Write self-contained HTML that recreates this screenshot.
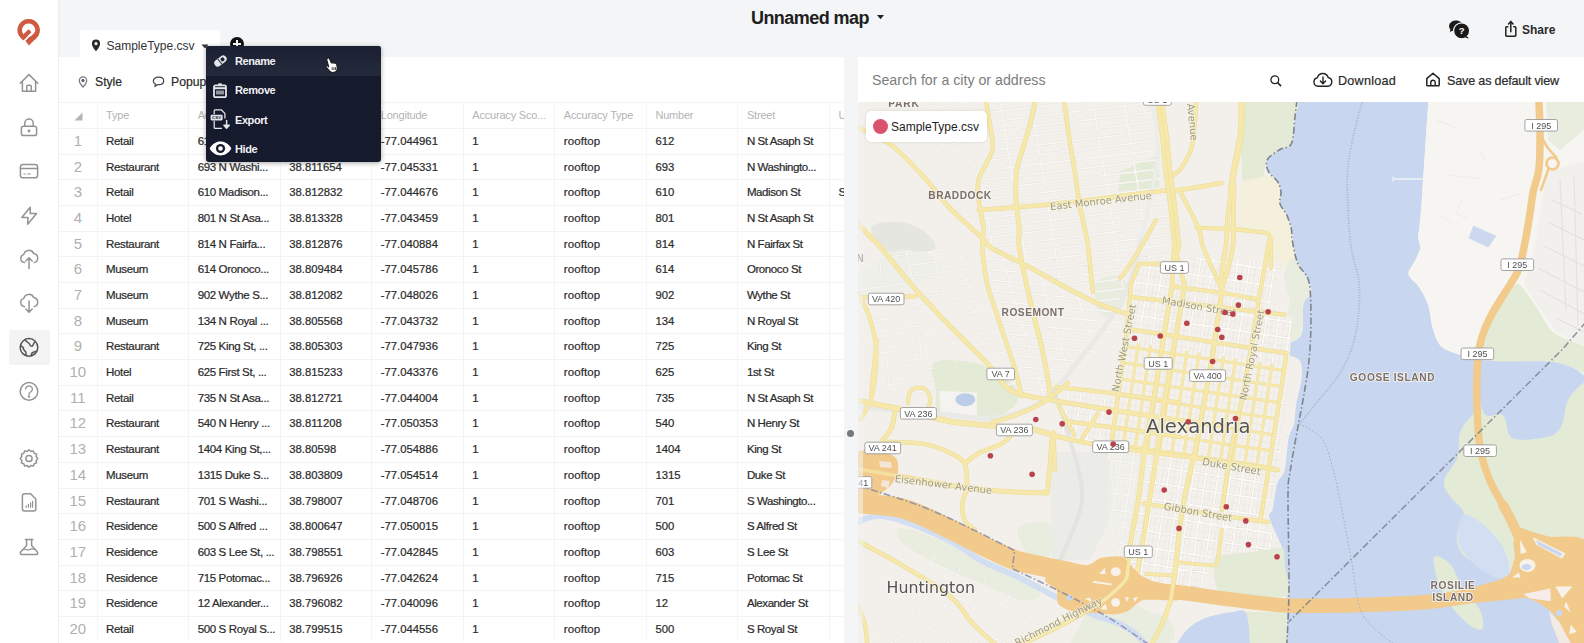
<!DOCTYPE html>
<html lang="en">
<head>
<meta charset="utf-8">
<title>Unnamed map</title>
<style>
*{box-sizing:border-box;margin:0;padding:0}
html,body{width:1584px;height:643px;overflow:hidden}
body{background:#f4f5f6;font-family:"Liberation Sans",sans-serif;color:#2a2a2a;position:relative}
.abs{position:absolute}
#sidebar{left:0;top:0;width:58px;height:643px;background:#fff;box-shadow:1px 0 3px rgba(0,0,0,.05)}
#sidebar svg{position:absolute;left:17px}
.sic{fill:none;stroke:#939393;stroke-width:1.5;stroke-linecap:round;stroke-linejoin:round}
#title{left:751px;top:7.500px;font-size:18px;font-weight:bold;color:#1e1e1e;white-space:nowrap;letter-spacing:-.56px}
#tab{left:80px;top:30px;width:140px;height:28px;background:#fff;border-radius:3px 3px 0 0}
#tab span{position:absolute;left:26.500px;top:8.500px;font-size:12px;color:#333;white-space:nowrap}
#lpanel{left:59px;top:57px;width:785px;height:586px;background:#fff}
#rpanel{left:858px;top:57px;width:726px;height:45px;background:#fff}
.tb{font-size:12.200px;color:#2a2a2a;white-space:nowrap;-webkit-text-stroke:.2px #2a2a2a}
#grid{left:59px;top:102px;width:785px;height:541px;overflow:hidden}
.row{position:absolute;left:0;width:785px;height:26px;border-top:1px solid #f3f3f3}
.c{position:absolute;top:0;height:100%;border-left:1px solid #f5f5f5;-webkit-text-stroke:.22px #2b2b2b;font-size:11.500px;line-height:25px;padding-left:8.500px;letter-spacing:-.35px;color:#2b2b2b;white-space:nowrap;overflow:hidden}
.hd .c{color:#b3b3b3;-webkit-text-stroke:0;font-size:11px;letter-spacing:-.2px}
.c.num{font-size:11.300px;letter-spacing:0}
.c.st{letter-spacing:-.42px}
.c.rt{letter-spacing:.08px}
.n{position:absolute;left:0;top:0;width:37.600px;height:100%;text-align:center;font-size:15px;line-height:23px;color:#b0b0b0}
#menu{left:206px;top:46px;width:174.500px;height:115.500px;background:#151a2d;border-radius:3px;box-shadow:0 1px 5px rgba(0,0,0,.35)}
#menu .it{position:absolute;left:0;width:175px;height:29px;color:#f1f1f5;font-size:11px;font-weight:bold;line-height:30.500px;padding-left:29px;letter-spacing:-.42px}
#menu svg{position:absolute}
#search{left:872px;top:72.300px;font-size:14.200px;color:#7d7d7d;white-space:nowrap}
#map{left:858px;top:102px;width:726px;height:541px;overflow:hidden;background:#f3f0eb}
#mapwrap{left:858px;top:102px;width:726px;height:541px;overflow:hidden;background:#f3f0eb}
#mapwrap svg{position:absolute;left:0;top:0;filter:blur(.45px)}
#legend{left:866px;top:111px;width:120.500px;height:30.500px;background:#fff;border-radius:5px;box-shadow:0 0 3px rgba(0,0,0,.12)}
#legend i{position:absolute;left:7px;top:8px;width:15px;height:15px;border-radius:50%;background:#d9536c}
#legend span{position:absolute;left:25px;top:8.600px;font-size:12px;color:#222;white-space:nowrap}
</style>
</head>
<body>
<div id="sidebar" class="abs">
<!-- logo -->
<svg style="left:14px;top:16px" width="30" height="32" viewBox="0 0 30 32"><path d="M14.6 5.2 a8.9 8.9 0 1 0 0.1 0 z" fill="none" stroke="#cf5a3f" stroke-width="4.6"/><path d="M9.6 24.2 L17.6 16.2 L14.6 13.2 L7 20.6 Z" fill="#cf5a3f"/><path d="M21.6 15.5 L11.8 25.6 L15 29.6 L24.6 19.6 Z" fill="#cf5a3f"/><path d="M10.2 24.9 L19.4 15.6" stroke="#fff" stroke-width="1.5"/></svg>
<!-- home -->
<svg style="top:71px" width="24" height="24" viewBox="0 0 24 24" class="sic"><path d="M3.2 12.2 L12 3.6 L20.8 12.2"/><path d="M5.4 10.4 V20.2 H18.6 V10.4"/><path d="M9.8 20.2 V15.2 a1 1 0 0 1 1 -1 h2.4 a1 1 0 0 1 1 1 V20.2"/></svg>
<!-- lock -->
<svg style="top:115px" width="24" height="24" viewBox="0 0 24 24" class="sic"><rect x="4.4" y="11.2" width="15.2" height="9.4" rx="2.2"/><path d="M7.8 11.2 V8.2 a4.2 4.2 0 0 1 8.4 0 V11.2"/><circle cx="12" cy="16" r=".7" fill="#8e8e8e"/></svg>
<!-- card -->
<svg style="top:159px" width="24" height="24" viewBox="0 0 24 24" class="sic"><rect x="3.4" y="5.4" width="17.2" height="13.4" rx="2.6"/><path d="M3.6 9.6 H20.4"/><path d="M6.8 15 H8.2 M10.6 15 H13.4" stroke-width="1.2"/></svg>
<!-- bolt -->
<svg style="top:203px" width="24" height="24" viewBox="0 0 24 24" class="sic"><path d="M13.2 4.2 L4.8 14.4 H11 L10.6 21.2 L19.6 10.6 H13.2 Z"/></svg>
<!-- cloud up -->
<svg style="top:247px" width="24" height="24" viewBox="0 0 24 24" class="sic"><path d="M7.4 15.6 a4.2 4.2 0 0 1 -.6 -8.2 a5.2 5.2 0 0 1 9.8 -1 a4.7 4.7 0 0 1 .6 9.2"/><path d="M12 21.4 V11.2 M8.8 14 L12 10.8 L15.2 14"/></svg>
<!-- cloud down -->
<svg style="top:291px" width="24" height="24" viewBox="0 0 24 24" class="sic"><path d="M7.4 15.6 a4.2 4.2 0 0 1 -.6 -8.2 a5.2 5.2 0 0 1 9.8 -1 a4.7 4.7 0 0 1 .6 9.2"/><path d="M12 10 V20.8 M8.8 18 L12 21.2 L15.2 18"/></svg>
<!-- globe (active) -->
<div class="abs" style="left:9px;top:330px;width:41px;height:35px;background:#f3f3f4;border-radius:2px"></div>
<svg style="top:335px" width="24" height="24" viewBox="0 0 24 24" class="sic" stroke="#555"><g stroke="#555"><circle cx="12" cy="12.4" r="8.8"/><path d="M8.2 4.6 c.6 2.6 3.2 2.2 4 4 c.6 1.6 1.2 3.2 2.8 2.6 c1.600 -.6 1.200 -3 2.6 -3.800"/><path d="M4 11 c2 .4 2.400 1.800 2.600 3.200 c.2 1.600 2.400 1.800 2.400 3.600 c0 1.200 -.2 2 .4 3"/><path d="M14.400 20.800 c-.2 -1.600 .4 -3.200 2 -3.600 c1.200 -.3 2.200 -.4 3 -1.200"/></g></svg>
<!-- help -->
<svg style="top:379px" width="24" height="24" viewBox="0 0 24 24" class="sic"><circle cx="12" cy="12.400" r="8.800"/><path d="M8.6 10 a3.400 3.100 0 1 1 5.200 2.700 c-1.200 .8 -1.800 1.400 -1.800 2.700" stroke-width="1.300"/><circle cx="12" cy="17.600" r=".5" fill="#8e8e8e"/></svg>
<!-- gear -->
<svg style="top:446px" width="24" height="24" viewBox="0 0 24 24" class="sic"><circle cx="12" cy="12.500" r="3.100"/><path d="M12 3.700 l1.900 1.700 2.500 -.5 .8 2.400 2.400 .8 -.5 2.500 1.700 1.900 -1.700 1.900 .5 2.500 -2.400 .8 -.8 2.400 -2.500 -.5 -1.900 1.700 -1.900 -1.700 -2.500 .5 -.8 -2.400 -2.400 -.8 .5 -2.500 -1.700 -1.900 1.700 -1.900 -.5 -2.500 2.400 -.8 .8 -2.400 2.500 .5 z"/></svg>
<!-- report -->
<svg style="top:490px" width="24" height="24" viewBox="0 0 24 24" class="sic"><path d="M7.400 3.800 H13.600 L18.800 9 V19 a2 2 0 0 1 -2 2 H7.400 a2 2 0 0 1 -2 -2 V5.800 a2 2 0 0 1 2 -2 z"/><path d="M9.200 17.200 V15.800 M11.400 17.200 V14.400 M13.600 17.200 V12.800 M15.600 17.200 V11.400" stroke-width="1.200"/></svg>
<!-- flask -->
<svg style="top:534px" width="24" height="24" viewBox="0 0 24 24" class="sic"><path d="M8.400 5.400 H15.800"/><path d="M9.600 5.600 V11.600 L3.600 18 a1.600 1.600 0 0 0 1.200 2.600 H19.200 a1.600 1.600 0 0 0 1.200 -2.600 L14.600 11.600 V5.600"/><path d="M6.400 15.600 c2 -1.200 4 1 6 0 c1.800 -.9 3.400 -.8 5 -.2" stroke-width="1.200"/></svg>
</div>
<div id="title" class="abs">Unnamed map</div>
<svg class="abs" style="left:876px;top:14px" width="9" height="6" viewBox="0 0 9 6"><path d="M1 1 H8 L4.500 5.200 Z" fill="#222"/></svg>
<!-- top right -->
<svg class="abs" style="left:1447px;top:17px" width="26" height="24" viewBox="0 0 26 24"><path d="M2 9 a7 5.600 0 1 1 3.400 4.800 L2.800 15 L3.400 12.600 A5.500 5.500 0 0 1 2 9 z" fill="#1a1a1a"/><circle cx="14.600" cy="13.800" r="8" fill="#1a1a1a" stroke="#f4f4f5" stroke-width="1.200"/><path d="M19.500 19 l2.600 2.400 -3.800 -.6z" fill="#1a1a1a"/><text x="14.600" y="17.400" font-family="Liberation Sans, sans-serif" font-size="9.500" font-weight="bold" fill="#fff" text-anchor="middle">?</text></svg>
<svg class="abs" style="left:1503px;top:19px" width="16" height="20" viewBox="0 0 16 20"><path d="M5.400 7.800 H3.600 a.8 .8 0 0 0 -.8 .8 V16.400 a.8 .8 0 0 0 .8 .8 H12 a.8 .8 0 0 0 .8 -.8 V8.600 a.8 .8 0 0 0 -.8 -.8 H10.200" fill="none" stroke="#222" stroke-width="1.500" stroke-linejoin="round"/><path d="M7.800 12.800 V2.800 M5.500 4.900 L7.800 2.400 L10.100 4.900" fill="none" stroke="#222" stroke-width="1.500" stroke-linecap="round" stroke-linejoin="round"/></svg>
<div class="abs" style="left:1522px;top:23px;font-size:12px;font-weight:bold;color:#2a2a2a">Share</div>
<!-- tab -->
<div id="tab" class="abs">
<svg style="position:absolute;left:11px;top:9px" width="10" height="13" viewBox="0 0 10 13"><path d="M5 .6 a4.100 4.100 0 0 1 4.100 4.100 c0 3 -4.100 7.500 -4.100 7.500 s-4.100 -4.500 -4.100 -7.500 A4.100 4.100 0 0 1 5 .6 z M5 3.100 a1.600 1.600 0 1 0 .01 0z" fill="#2b2b2b" fill-rule="evenodd"/></svg>
<span>SampleType.csv</span>
<svg style="position:absolute;left:121px;top:14px" width="8" height="5" viewBox="0 0 8 5"><path d="M.5 .5 H7.500 L4 4.500 Z" fill="#333"/></svg>
</div>
<div class="abs" style="left:230px;top:37px;width:14px;height:14px;border-radius:50%;background:#111"></div>
<div class="abs" style="left:233px;top:43px;width:8px;height:2px;background:#fff"></div>
<div class="abs" style="left:236px;top:40px;width:2px;height:8px;background:#fff"></div>
<!-- panels -->
<div id="lpanel" class="abs"></div>
<div id="rpanel" class="abs"></div>
<!-- toolbar -->
<svg class="abs" style="left:78px;top:76px" width="10" height="12" viewBox="0 0 10 12"><path d="M5 .8 a3.700 3.700 0 0 1 3.700 3.700 c0 2.700 -3.700 6.500 -3.700 6.500 s-3.700 -3.800 -3.700 -6.500 A3.700 3.700 0 0 1 5 .8 z" fill="none" stroke="#777" stroke-width="1.200"/><circle cx="5" cy="4.500" r="1.700" fill="#666"/></svg>
<div class="abs tb" style="left:95px;top:75px">Style</div>
<svg class="abs" style="left:152px;top:76px" width="13" height="12" viewBox="0 0 13 12"><path d="M6.500 1.200 c3 0 5.200 1.500 5.200 3.700 s-2.200 3.700 -5.200 3.700 c-.4 0 -.8 0 -1.200 -.1 L3 10.600 L3.400 8 C2 7.300 1.300 6.200 1.300 4.900 c0 -2.200 2.200 -3.700 5.200 -3.700z" fill="none" stroke="#444" stroke-width="1.200" stroke-linejoin="round"/></svg>
<div class="abs tb" style="left:171px;top:75px">Popup</div>
<!-- search bar -->
<div id="search" class="abs">Search for a city or address</div>
<svg class="abs" style="left:1269px;top:74px" width="14" height="14" viewBox="0 0 14 14"><circle cx="5.800" cy="5.800" r="3.900" fill="none" stroke="#222" stroke-width="1.300"/><path d="M8.600 8.600 L11.600 11.600" stroke="#222" stroke-width="1.500" stroke-linecap="round"/></svg>
<svg class="abs" style="left:1312px;top:71px" width="22" height="18" viewBox="0 0 22 18"><path d="M6 15.200 a4.300 4.300 0 0 1 -.6 -8.500 a5.600 5.600 0 0 1 10.800 -.2 a4.400 4.400 0 0 1 -.4 8.700 z" fill="none" stroke="#222" stroke-width="1.400" stroke-linejoin="round"/><path d="M11 6 V12.400 M8.400 10 L11 12.700 L13.600 10" fill="none" stroke="#222" stroke-width="1.400" stroke-linecap="round" stroke-linejoin="round"/></svg>
<div class="abs tb" style="left:1338px;top:73.500px;font-size:12.600px;letter-spacing:.25px">Download</div>
<svg class="abs" style="left:1424px;top:71px" width="18" height="17" viewBox="0 0 18 17"><path d="M2.800 7.600 L9 2.200 L15.200 7.600 V14 a.8 .8 0 0 1 -.8 .8 H3.600 a.8 .8 0 0 1 -.8 -.8 Z" fill="none" stroke="#222" stroke-width="1.500" stroke-linejoin="round"/><path d="M6.800 14.800 V11.400 a2.200 2.200 0 0 1 4.400 0 V14.800" fill="none" stroke="#222" stroke-width="1.400"/></svg>
<div class="abs tb" style="left:1447px;top:73.500px;font-size:12.600px;letter-spacing:-.18px">Save as default view</div>
<div id="grid" class="abs">
<div class="row hd" style="top:0px;height:26px"><svg style="position:absolute;left:15px;top:9px" width="9" height="9" viewBox="0 0 9 9"><path d="M8.500 .5 V8.500 H.5 Z" fill="#b5b5b5"/></svg><div class="c " style="left:37.60px;width:91.55px">Type</div><div class="c " style="left:129.15px;width:91.55px">Address</div><div class="c " style="left:220.70px;width:91.55px">Latitude</div><div class="c " style="left:312.25px;width:91.55px">Longitude</div><div class="c " style="left:403.80px;width:91.55px">Accuracy Sco...</div><div class="c " style="left:495.35px;width:91.55px">Accuracy Type</div><div class="c " style="left:586.90px;width:91.55px">Number</div><div class="c " style="left:678.45px;width:91.55px">Street</div><div class="c " style="left:770.00px;width:91.55px">U</div></div>
<div class="row" style="top:26.00px"><div class="n">1</div><div class="c " style="left:37.60px;width:91.55px">Retail</div><div class="c " style="left:129.15px;width:91.55px">612 N St Asa...</div><div class="c num" style="left:220.70px;width:91.55px">38.813047</div><div class="c num" style="left:312.25px;width:91.55px">-77.044961</div><div class="c num" style="left:403.80px;width:91.55px">1</div><div class="c rt" style="left:495.35px;width:91.55px">rooftop</div><div class="c num" style="left:586.90px;width:91.55px">612</div><div class="c st" style="left:678.45px;width:91.55px">N St Asaph St</div><div class="c " style="left:770.00px;width:91.55px"></div></div>
<div class="row" style="top:51.68px"><div class="n">2</div><div class="c " style="left:37.60px;width:91.55px">Restaurant</div><div class="c " style="left:129.15px;width:91.55px">693 N Washi...</div><div class="c num" style="left:220.70px;width:91.55px">38.811654</div><div class="c num" style="left:312.25px;width:91.55px">-77.045331</div><div class="c num" style="left:403.80px;width:91.55px">1</div><div class="c rt" style="left:495.35px;width:91.55px">rooftop</div><div class="c num" style="left:586.90px;width:91.55px">693</div><div class="c st" style="left:678.45px;width:91.55px">N Washingto...</div><div class="c " style="left:770.00px;width:91.55px"></div></div>
<div class="row" style="top:77.36px"><div class="n">3</div><div class="c " style="left:37.60px;width:91.55px">Retail</div><div class="c " style="left:129.15px;width:91.55px">610 Madison...</div><div class="c num" style="left:220.70px;width:91.55px">38.812832</div><div class="c num" style="left:312.25px;width:91.55px">-77.044676</div><div class="c num" style="left:403.80px;width:91.55px">1</div><div class="c rt" style="left:495.35px;width:91.55px">rooftop</div><div class="c num" style="left:586.90px;width:91.55px">610</div><div class="c st" style="left:678.45px;width:91.55px">Madison St</div><div class="c " style="left:770.00px;width:91.55px">S</div></div>
<div class="row" style="top:103.04px"><div class="n">4</div><div class="c " style="left:37.60px;width:91.55px">Hotel</div><div class="c " style="left:129.15px;width:91.55px">801 N St Asa...</div><div class="c num" style="left:220.70px;width:91.55px">38.813328</div><div class="c num" style="left:312.25px;width:91.55px">-77.043459</div><div class="c num" style="left:403.80px;width:91.55px">1</div><div class="c rt" style="left:495.35px;width:91.55px">rooftop</div><div class="c num" style="left:586.90px;width:91.55px">801</div><div class="c st" style="left:678.45px;width:91.55px">N St Asaph St</div><div class="c " style="left:770.00px;width:91.55px"></div></div>
<div class="row" style="top:128.72px"><div class="n">5</div><div class="c " style="left:37.60px;width:91.55px">Restaurant</div><div class="c " style="left:129.15px;width:91.55px">814 N Fairfa...</div><div class="c num" style="left:220.70px;width:91.55px">38.812876</div><div class="c num" style="left:312.25px;width:91.55px">-77.040884</div><div class="c num" style="left:403.80px;width:91.55px">1</div><div class="c rt" style="left:495.35px;width:91.55px">rooftop</div><div class="c num" style="left:586.90px;width:91.55px">814</div><div class="c st" style="left:678.45px;width:91.55px">N Fairfax St</div><div class="c " style="left:770.00px;width:91.55px"></div></div>
<div class="row" style="top:154.40px"><div class="n">6</div><div class="c " style="left:37.60px;width:91.55px">Museum</div><div class="c " style="left:129.15px;width:91.55px">614 Oronoco...</div><div class="c num" style="left:220.70px;width:91.55px">38.809484</div><div class="c num" style="left:312.25px;width:91.55px">-77.045786</div><div class="c num" style="left:403.80px;width:91.55px">1</div><div class="c rt" style="left:495.35px;width:91.55px">rooftop</div><div class="c num" style="left:586.90px;width:91.55px">614</div><div class="c st" style="left:678.45px;width:91.55px">Oronoco St</div><div class="c " style="left:770.00px;width:91.55px"></div></div>
<div class="row" style="top:180.08px"><div class="n">7</div><div class="c " style="left:37.60px;width:91.55px">Museum</div><div class="c " style="left:129.15px;width:91.55px">902 Wythe S...</div><div class="c num" style="left:220.70px;width:91.55px">38.812082</div><div class="c num" style="left:312.25px;width:91.55px">-77.048026</div><div class="c num" style="left:403.80px;width:91.55px">1</div><div class="c rt" style="left:495.35px;width:91.55px">rooftop</div><div class="c num" style="left:586.90px;width:91.55px">902</div><div class="c st" style="left:678.45px;width:91.55px">Wythe St</div><div class="c " style="left:770.00px;width:91.55px"></div></div>
<div class="row" style="top:205.76px"><div class="n">8</div><div class="c " style="left:37.60px;width:91.55px">Museum</div><div class="c " style="left:129.15px;width:91.55px">134 N Royal ...</div><div class="c num" style="left:220.70px;width:91.55px">38.805568</div><div class="c num" style="left:312.25px;width:91.55px">-77.043732</div><div class="c num" style="left:403.80px;width:91.55px">1</div><div class="c rt" style="left:495.35px;width:91.55px">rooftop</div><div class="c num" style="left:586.90px;width:91.55px">134</div><div class="c st" style="left:678.45px;width:91.55px">N Royal St</div><div class="c " style="left:770.00px;width:91.55px"></div></div>
<div class="row" style="top:231.44px"><div class="n">9</div><div class="c " style="left:37.60px;width:91.55px">Restaurant</div><div class="c " style="left:129.15px;width:91.55px">725 King St, ...</div><div class="c num" style="left:220.70px;width:91.55px">38.805303</div><div class="c num" style="left:312.25px;width:91.55px">-77.047936</div><div class="c num" style="left:403.80px;width:91.55px">1</div><div class="c rt" style="left:495.35px;width:91.55px">rooftop</div><div class="c num" style="left:586.90px;width:91.55px">725</div><div class="c st" style="left:678.45px;width:91.55px">King St</div><div class="c " style="left:770.00px;width:91.55px"></div></div>
<div class="row" style="top:257.12px"><div class="n">10</div><div class="c " style="left:37.60px;width:91.55px">Hotel</div><div class="c " style="left:129.15px;width:91.55px">625 First St, ...</div><div class="c num" style="left:220.70px;width:91.55px">38.815233</div><div class="c num" style="left:312.25px;width:91.55px">-77.043376</div><div class="c num" style="left:403.80px;width:91.55px">1</div><div class="c rt" style="left:495.35px;width:91.55px">rooftop</div><div class="c num" style="left:586.90px;width:91.55px">625</div><div class="c st" style="left:678.45px;width:91.55px">1st St</div><div class="c " style="left:770.00px;width:91.55px"></div></div>
<div class="row" style="top:282.80px"><div class="n">11</div><div class="c " style="left:37.60px;width:91.55px">Retail</div><div class="c " style="left:129.15px;width:91.55px">735 N St Asa...</div><div class="c num" style="left:220.70px;width:91.55px">38.812721</div><div class="c num" style="left:312.25px;width:91.55px">-77.044004</div><div class="c num" style="left:403.80px;width:91.55px">1</div><div class="c rt" style="left:495.35px;width:91.55px">rooftop</div><div class="c num" style="left:586.90px;width:91.55px">735</div><div class="c st" style="left:678.45px;width:91.55px">N St Asaph St</div><div class="c " style="left:770.00px;width:91.55px"></div></div>
<div class="row" style="top:308.48px"><div class="n">12</div><div class="c " style="left:37.60px;width:91.55px">Restaurant</div><div class="c " style="left:129.15px;width:91.55px">540 N Henry ...</div><div class="c num" style="left:220.70px;width:91.55px">38.811208</div><div class="c num" style="left:312.25px;width:91.55px">-77.050353</div><div class="c num" style="left:403.80px;width:91.55px">1</div><div class="c rt" style="left:495.35px;width:91.55px">rooftop</div><div class="c num" style="left:586.90px;width:91.55px">540</div><div class="c st" style="left:678.45px;width:91.55px">N Henry St</div><div class="c " style="left:770.00px;width:91.55px"></div></div>
<div class="row" style="top:334.16px"><div class="n">13</div><div class="c " style="left:37.60px;width:91.55px">Restaurant</div><div class="c " style="left:129.15px;width:91.55px">1404 King St,...</div><div class="c num" style="left:220.70px;width:91.55px">38.80598</div><div class="c num" style="left:312.25px;width:91.55px">-77.054886</div><div class="c num" style="left:403.80px;width:91.55px">1</div><div class="c rt" style="left:495.35px;width:91.55px">rooftop</div><div class="c num" style="left:586.90px;width:91.55px">1404</div><div class="c st" style="left:678.45px;width:91.55px">King St</div><div class="c " style="left:770.00px;width:91.55px"></div></div>
<div class="row" style="top:359.84px"><div class="n">14</div><div class="c " style="left:37.60px;width:91.55px">Museum</div><div class="c " style="left:129.15px;width:91.55px">1315 Duke S...</div><div class="c num" style="left:220.70px;width:91.55px">38.803809</div><div class="c num" style="left:312.25px;width:91.55px">-77.054514</div><div class="c num" style="left:403.80px;width:91.55px">1</div><div class="c rt" style="left:495.35px;width:91.55px">rooftop</div><div class="c num" style="left:586.90px;width:91.55px">1315</div><div class="c st" style="left:678.45px;width:91.55px">Duke St</div><div class="c " style="left:770.00px;width:91.55px"></div></div>
<div class="row" style="top:385.52px"><div class="n">15</div><div class="c " style="left:37.60px;width:91.55px">Restaurant</div><div class="c " style="left:129.15px;width:91.55px">701 S Washi...</div><div class="c num" style="left:220.70px;width:91.55px">38.798007</div><div class="c num" style="left:312.25px;width:91.55px">-77.048706</div><div class="c num" style="left:403.80px;width:91.55px">1</div><div class="c rt" style="left:495.35px;width:91.55px">rooftop</div><div class="c num" style="left:586.90px;width:91.55px">701</div><div class="c st" style="left:678.45px;width:91.55px">S Washingto...</div><div class="c " style="left:770.00px;width:91.55px"></div></div>
<div class="row" style="top:411.20px"><div class="n">16</div><div class="c " style="left:37.60px;width:91.55px">Residence</div><div class="c " style="left:129.15px;width:91.55px">500 S Alfred ...</div><div class="c num" style="left:220.70px;width:91.55px">38.800647</div><div class="c num" style="left:312.25px;width:91.55px">-77.050015</div><div class="c num" style="left:403.80px;width:91.55px">1</div><div class="c rt" style="left:495.35px;width:91.55px">rooftop</div><div class="c num" style="left:586.90px;width:91.55px">500</div><div class="c st" style="left:678.45px;width:91.55px">S Alfred St</div><div class="c " style="left:770.00px;width:91.55px"></div></div>
<div class="row" style="top:436.88px"><div class="n">17</div><div class="c " style="left:37.60px;width:91.55px">Residence</div><div class="c " style="left:129.15px;width:91.55px">603 S Lee St, ...</div><div class="c num" style="left:220.70px;width:91.55px">38.798551</div><div class="c num" style="left:312.25px;width:91.55px">-77.042845</div><div class="c num" style="left:403.80px;width:91.55px">1</div><div class="c rt" style="left:495.35px;width:91.55px">rooftop</div><div class="c num" style="left:586.90px;width:91.55px">603</div><div class="c st" style="left:678.45px;width:91.55px">S Lee St</div><div class="c " style="left:770.00px;width:91.55px"></div></div>
<div class="row" style="top:462.56px"><div class="n">18</div><div class="c " style="left:37.60px;width:91.55px">Residence</div><div class="c " style="left:129.15px;width:91.55px">715 Potomac...</div><div class="c num" style="left:220.70px;width:91.55px">38.796926</div><div class="c num" style="left:312.25px;width:91.55px">-77.042624</div><div class="c num" style="left:403.80px;width:91.55px">1</div><div class="c rt" style="left:495.35px;width:91.55px">rooftop</div><div class="c num" style="left:586.90px;width:91.55px">715</div><div class="c st" style="left:678.45px;width:91.55px">Potomac St</div><div class="c " style="left:770.00px;width:91.55px"></div></div>
<div class="row" style="top:488.24px"><div class="n">19</div><div class="c " style="left:37.60px;width:91.55px">Residence</div><div class="c " style="left:129.15px;width:91.55px">12 Alexander...</div><div class="c num" style="left:220.70px;width:91.55px">38.796082</div><div class="c num" style="left:312.25px;width:91.55px">-77.040096</div><div class="c num" style="left:403.80px;width:91.55px">1</div><div class="c rt" style="left:495.35px;width:91.55px">rooftop</div><div class="c num" style="left:586.90px;width:91.55px">12</div><div class="c st" style="left:678.45px;width:91.55px">Alexander St</div><div class="c " style="left:770.00px;width:91.55px"></div></div>
<div class="row" style="top:513.92px"><div class="n">20</div><div class="c " style="left:37.60px;width:91.55px">Retail</div><div class="c " style="left:129.15px;width:91.55px">500 S Royal S...</div><div class="c num" style="left:220.70px;width:91.55px">38.799515</div><div class="c num" style="left:312.25px;width:91.55px">-77.044556</div><div class="c num" style="left:403.80px;width:91.55px">1</div><div class="c rt" style="left:495.35px;width:91.55px">rooftop</div><div class="c num" style="left:586.90px;width:91.55px">500</div><div class="c st" style="left:678.45px;width:91.55px">S Royal St</div><div class="c " style="left:770.00px;width:91.55px"></div></div>
</div>
<div id="mapwrap" class="abs"><svg width="726" height="541" viewBox="858 102 726 541" font-family="Liberation Sans, DejaVu Sans, sans-serif">
<rect x="858" y="102" width="726" height="541" fill="#f3f0eb"/>
<path d="M1297 100C1296.6 103.1 1295.7 111.1 1294.8 118.4C1293.9 125.7 1293.9 138.5 1291.4 143.7C1288.9 148.9 1283.9 146.8 1279.9 149.5C1275.9 152.2 1269.1 156.2 1267.2 159.9C1265.3 163.6 1266.7 167.8 1268.4 171.4C1270.1 175 1275.5 178.2 1277.6 181.7C1279.7 185.1 1280.6 188.4 1281 192.1C1281.4 195.8 1278.9 199.8 1279.9 203.6C1280.9 207.4 1284.9 210.9 1286.8 215.1C1288.7 219.3 1290.2 223.5 1291.4 229C1292.6 234.5 1292.9 242.9 1293.7 248C1294.5 253.1 1293.5 254.1 1296 259.8C1298.5 265.5 1306.5 276.6 1309 282.2C1311.5 287.8 1311.8 289.7 1310.9 293.4C1310 297.1 1305 297.8 1303.4 304.6C1301.8 311.4 1304.6 327.6 1301.5 334.4C1298.4 341.2 1287.9 342.5 1284.8 345.6C1281.7 348.7 1280.4 350.6 1282.9 353.1C1285.4 355.6 1296.6 356.1 1299.7 360.5C1302.8 364.9 1302.1 371.7 1301.5 379.2C1300.9 386.7 1297.2 397.8 1296 405.3C1294.8 412.8 1295.3 418.4 1294.1 424C1292.8 429.6 1290 431.2 1288.5 438.9C1287 446.6 1286.7 462.6 1284.8 470C1282.9 477.4 1279.3 477.1 1277.3 483.6C1275.3 490.1 1274 503.3 1272.7 509C1271.4 514.7 1267.9 511.5 1269.5 518C1271.1 524.5 1279.7 540.3 1282.2 548C1284.7 555.7 1283.7 556 1284.5 564C1285.3 572 1286.4 587 1286.8 596C1287.2 605 1287.1 609.8 1287 618C1286.9 626.2 1286.2 640.5 1286 645 L1286 645 L1586 645 L1586 377 L1586 377C1583.8 375.4 1579 370.3 1573 367.7C1567 365.1 1563.1 362.6 1550.1 361.5C1537.1 360.4 1507.2 361.3 1494.9 360.8C1482.6 360.3 1483.4 359.9 1476.5 358.5C1469.6 357.1 1459.6 355 1453.5 352.7C1447.4 350.4 1443.2 348.7 1439.7 344.7C1436.2 340.7 1434.7 335.1 1432.8 328.6C1430.9 322.1 1430.5 312.4 1428.2 305.5C1425.9 298.6 1422.3 292.3 1419 287.1C1415.7 281.9 1409.4 278.7 1408.6 274.5C1407.8 270.3 1412.5 266.2 1414.4 261.8C1416.4 257.4 1419.7 252 1420.3 248C1420.9 244 1418.2 241.2 1418 238C1417.8 234.8 1418.6 234.7 1419.2 229C1419.8 223.3 1420.7 213.6 1421.5 203.6C1422.3 193.6 1423 180.5 1423.8 169C1424.6 157.5 1425.3 146 1426.1 134.5C1426.9 123 1428 105.8 1428.4 100Z" fill="#c8d6ef"/>
<path d="M1586 372C1583.4 333.5 1580.2 369.8 1573 367.7C1565.8 365.6 1565.6 362.8 1550 361.5C1534.4 360.2 1508.3 361 1494.9 361C1481.5 361 1485.8 357.7 1483 361.5C1480.2 365.3 1481.8 369.9 1481 380C1480.2 390.1 1480.5 405.2 1479 412C1477.5 418.8 1477.3 410.1 1473.6 414C1469.9 417.9 1463.8 422.9 1460.5 431.7C1457.2 440.5 1460.5 448 1457.2 457.8C1453.9 467.6 1445.5 472.9 1444.2 480.7C1442.9 488.5 1446.8 490.5 1450.7 497C1454.6 503.5 1462.5 506.2 1463.8 513.4C1465.1 520.6 1458 525.7 1457.2 533C1456.4 540.3 1457.4 544.6 1460 550C1462.6 555.4 1464.4 556.8 1470 560C1475.6 563.2 1481 563 1488 566C1495 569 1498.6 571.6 1505 575C1511.4 578.4 1503.8 586 1520 583C1536.2 580 1572.8 602.2 1586 560C1599.2 517.8 1588.6 410.5 1586 372Z" fill="#e3ebd6"/>
<path d="M1483.4 361.4C1500.5 353.8 1568.9 363.3 1586 366.3C1603.1 369.3 1589 373.9 1586 379.4C1583 384.8 1572.3 391.4 1568.3 399C1564.3 406.6 1565.1 418.8 1561.8 425.1C1558.5 431.4 1556.9 434.4 1548.7 436.6C1540.5 438.8 1520.4 441.8 1512.8 438.2C1505.2 434.6 1507.9 419.7 1503 415.3C1498.1 410.9 1486.7 421 1483.4 412C1480.1 403 1466.3 369 1483.4 361.4Z" fill="#c8d6ef"/>
<path d="M1463 515C1466.7 512 1474.2 517.8 1480 522C1485.8 526.2 1493.3 533.7 1498 540C1502.7 546.3 1506.3 553.3 1508 560C1509.7 566.7 1511 577.5 1508 580C1505 582.5 1496.3 578.3 1490 575C1483.7 571.7 1475.3 565.8 1470 560C1464.7 554.2 1459.2 547.5 1458 540C1456.8 532.5 1459.3 518 1463 515Z" fill="#d2def2"/>
<path d="M1434 557C1435.9 553.9 1445.3 559 1450 564C1454.7 569 1457 579.3 1462 587C1467 594.7 1476.6 603.1 1480 610C1483.4 616.9 1484 625.8 1482.5 628.5C1481 631.2 1476 629.4 1471 626C1466 622.6 1458 615.2 1452.6 608C1447.2 600.8 1441.8 591 1438.7 582.5C1435.6 574 1432.1 560.1 1434 557Z" fill="#e3ebd6"/>
<path d="M1428.4 100C1428 105.8 1426.9 123 1426.1 134.5C1425.3 146 1424.6 157.5 1423.8 169C1423 180.5 1422.3 193.6 1421.5 203.6C1420.7 213.6 1419.8 223.3 1419.2 229C1418.6 234.7 1417.8 234.8 1418 238C1418.2 241.2 1420.9 244 1420.3 248C1419.7 252 1416.4 257.4 1414.4 261.8C1412.5 266.2 1407.8 270.3 1408.6 274.5C1409.4 278.7 1415.7 281.9 1419 287.1C1422.3 292.3 1425.9 298.6 1428.2 305.5C1430.5 312.4 1430.9 322.1 1432.8 328.6C1434.7 335.1 1436.2 340.7 1439.7 344.7C1443.2 348.7 1447.4 350.4 1453.5 352.7C1459.6 355 1469.6 357.1 1476.5 358.5C1483.4 359.9 1482.6 360.3 1494.9 360.8C1507.2 361.3 1537.1 360.4 1550.1 361.5C1563.1 362.6 1567 365.1 1573 367.7C1579 370.3 1583.8 375.4 1586 377 L1586 377 L1586 100 Z" fill="#f6f5f2"/>
<path d="M1546 100L1586 100L1586 128L1560 150L1548 140Z" fill="#e8eddf"/>
<path d="M1519 284.5C1522.9 286 1530.3 298.5 1535 305C1539.7 311.5 1547.2 327.3 1554 333C1560.8 338.7 1581.7 342.8 1586 348C1590.3 353.2 1587.7 369.4 1586 372C1584.3 374.6 1577.8 369.1 1573 367.7C1568.2 366.3 1560.4 362.4 1550 361.5C1539.6 360.6 1504 362.3 1494.9 361C1485.8 359.7 1483.5 355.5 1482 352C1480.5 348.5 1482.7 339.9 1484 335C1485.3 330.1 1489.1 320.5 1492 315C1494.9 309.5 1502.4 298.1 1506 294C1509.6 289.9 1515.1 283 1519 284.5Z" fill="#e3ebd6"/>
<path d="M1548 172L1586 160L1586 346L1556 332L1537 304L1524 284L1536 240L1542 200Z" fill="#f1f0ec"/>
<g stroke="#e3e2de" stroke-width="1.200" fill="none"><path d="M1552 200l30 14M1548 222l36 18M1544 246l40 20M1538 268l46 24M1540 290l44 24M1556 318l28 14M1560 180l6 130M1574 176l4 150"/></g>
<path d="M1473.3 225.5L1496.3 235.9L1488.3 247.4L1468.7 238.2Z" fill="#cbd8ee"/>
<path d="M1393 179H1423" stroke="#eef2f8" stroke-width="1.500"/><path d="M1393 176.500V181.500" stroke="#eef2f8" stroke-width="1.200"/>
<g stroke="#eeece8" stroke-width="1" fill="none"><path d="M1436 120l20 8M1450 175l30 4M1462 200l-6 14 12 4M1500 200l20 -6M1440 215l14 10M1480 150l6 12"/></g>
<path d="M1243 100C1247.5 93.3 1292.7 98.5 1297 100C1301.3 101.5 1295.3 114.8 1294.8 118.4C1294.3 122 1292.6 141.1 1291.4 143.7C1290.2 146.3 1281.9 148.2 1279.9 149.5C1277.9 150.8 1268.5 158 1267.2 159.9C1265.9 161.8 1264.4 170.3 1264 172C1263.6 173.7 1263.8 179.3 1262 180C1260.2 180.7 1244.6 186.7 1243 180C1241.4 173.3 1238.5 106.7 1243 100Z" fill="#e3ebd6"/>
<path d="M1241 184C1243.3 179.5 1265 176.2 1268 176C1271 175.8 1276.5 180.4 1277.6 181.7C1278.7 183 1280.8 190.3 1281 192.1C1281.2 193.9 1279.4 201.7 1279.9 203.6C1280.4 205.5 1285.8 213 1286.8 215.1C1287.8 217.2 1290.8 226.3 1291.4 229C1292 231.7 1293.3 245.2 1293.7 248C1294.1 250.8 1297.8 260.2 1296 262C1294.2 263.8 1274.2 272.2 1272 270C1269.8 267.8 1272.7 239.3 1270 236C1267.3 232.7 1242.4 234.3 1240 230C1237.6 225.7 1238.7 188.5 1241 184Z" fill="#f5f0dc"/>
<path d="M1288 262C1289.6 259.3 1293.2 257.1 1296 259.8C1298.8 262.5 1307 277.7 1309 282.2C1311 286.7 1311.6 290.4 1310.9 293.4C1310.2 296.4 1304.7 299.1 1303.4 304.6C1302.1 310.1 1303.3 329.7 1301.5 334.4C1299.7 339.1 1292.1 341.9 1290 340C1287.9 338.1 1286 325.3 1286 320C1286 314.7 1290.3 305.3 1290 300C1289.7 294.7 1284.3 285.1 1284 280C1283.7 274.9 1286.4 264.7 1288 262Z" fill="#e8eddf"/>
<path d="M1120.5 171.4L1158.5 155.3L1159.6 188.6L1118.2 191Z" fill="#e3ebd6"/>
<path d="M872 226C875.3 222 891.2 221 900 222C908.8 223 919.2 227.3 925 232C930.8 236.7 938.3 246 935 250C931.7 254 914.2 256.7 905 256C895.8 255.3 885.5 251 880 246C874.5 241 868.7 230 872 226Z" fill="#e6e6e1"/>
<path d="M1096 282C1099.7 276.3 1114.7 273.7 1120 276C1125.3 278.3 1129.3 289 1128 296C1126.7 303 1117 315.7 1112 318C1107 320.3 1100.7 316 1098 310C1095.3 304 1092.3 287.7 1096 282Z" fill="#e8eddf"/>
<path d="M858 276C865 269 886.3 252.3 900 250C913.7 247.7 935 257 940 262C945 267 940 275 930 280C920 285 892 290 880 292C868 294 861.7 294.7 858 292C854.3 289.3 851 283 858 276Z" fill="#eeefe8"/>
<path d="M934.5 362.4C941.7 358 965.9 360.2 979.3 364.3C992.7 368.4 1008.9 379.9 1014.8 386.7C1020.7 393.5 1019.1 399.7 1014.8 405.3C1010.4 410.9 994.9 418.1 988.7 420.3C982.5 422.5 982.3 418.9 977.5 418.4C972.7 417.8 966.5 417.7 960 417C953.5 416.3 942.3 418.4 938.3 414C934.3 409.6 936.6 399 936 390.4C935.4 381.8 927.3 366.8 934.5 362.4Z" fill="#e3ebd6"/>
<path d="M939 391L977 392.5L977 416L941 414Z" fill="#f5f3ef"/>
<ellipse cx="965.300" cy="399.700" rx="10" ry="6.500" fill="#bccdea"/>
<path d="M1054 452L1112 452L1116 470L1110 520L1090 560L1052 560L1050 500Z" fill="#ebebe8"/>
<path d="M1018 528C1021 522.7 1042.3 520 1048 524C1053.7 528 1055 546.7 1052 552C1049 557.3 1035.7 560 1030 556C1024.3 552 1015 533.3 1018 528Z" fill="#e8eddf"/>
<path d="M1085 615C1090.8 612.5 1109.2 600.5 1120 600C1130.8 599.5 1141.7 608.7 1150 612C1158.3 615.3 1167.5 614.5 1170 620C1172.5 625.5 1181.7 640.8 1165 645C1148.3 649.2 1085.8 645 1070 645Z" fill="#e8eddf"/>
<path d="M1215 555C1218 550.6 1243.3 548.7 1250 548C1256.7 547.3 1278.8 546.4 1282.2 548C1285.7 549.6 1284 559.2 1284.5 564C1285 568.8 1293.2 593.2 1286.8 596C1280.3 598.8 1227.2 596.1 1220 592C1212.8 587.9 1212 559.4 1215 555Z" fill="#e3ebd6"/>
<path d="M1243 612L1287 612L1286 645L1246 645Z" fill="#e3ebd6"/>
<path d="M1175.9 645C1178 642.2 1183.2 632.9 1188.2 628.4C1193.2 623.9 1198.7 620.5 1205.7 617.9C1212.7 615.3 1223.3 613.4 1230 612.6C1236.7 611.8 1242.7 607.6 1246 613C1249.3 618.4 1249.3 639.7 1250 645Z" fill="#c8d6ef"/>
<path d="M900 528C905.8 527.2 923.3 533 940 540C956.7 547 983.3 561.3 1000 570C1016.7 578.7 1036.7 587 1040 592C1043.3 597 1033.3 602.8 1020 600C1006.7 597.2 979.2 584.2 960 575C940.8 565.8 915 552.8 905 545C895 537.2 894.2 528.8 900 528Z" fill="#e8eddf"/>
<path d="M856 522.3C860 521.2 870.4 515.4 879.8 515.8C889.2 516.2 899.7 519.8 912.4 524.5C925.1 529.2 944.6 538.1 955.9 544C967.1 549.9 969.2 554.3 979.9 560C990.6 565.7 1007.3 571.8 1020 578C1032.7 584.2 1046.8 592.3 1056 597C1065.2 601.7 1068.2 602.8 1075 606C1081.8 609.2 1089.6 613.2 1096.8 616.1C1104 619 1111.5 620.2 1117.9 623.1C1124.3 626 1130.7 630.1 1135.4 633.7C1140.1 637.4 1144.2 643.1 1146 645" fill="none" stroke="#d2def2" stroke-width="6" stroke-linecap="round"/>
<defs><clipPath id="ot"><path d="M1137 262L1200 258L1283 262L1270 300L1292 318L1290 352L1278 480L1264 520L1280 548L1250 552L1215 556L1200 600L1120 590L1108 452L1056 440L1062 392L1117 400L1128 330Z"/></clipPath>
<clipPath id="dr"><path d="M990 102L1160 102L1170 190L1176 250L1130 300L1100 304L1065 287L1024 264L991 248L978 200L992 148Z"/></clipPath>
<clipPath id="rm"><path d="M982 250L1023.8 266L1065 289L1100 306L1128 316L1110 340L1076 372L1052 394L1021 396L1005 340L988 285Z"/></clipPath>
<clipPath id="wk"><path d="M858 225L882 250L916 290L950 327L985 362L934 362L934 392L900 400L858 400Z"/></clipPath>
<clipPath id="kr"><path d="M884 250L980 250L986.9 282.5L996.2 312.5L1005.4 340.1L1014.6 367.7L1018 392L1005.4 386.2L987 363.1L950.1 326.3L915.6 289.4Z"/></clipPath>
<clipPath id="nw"><path d="M858 130L892.5 148L927 182L950 210L978 236L976 192L988 160L991 128L986 102L1000 102L858 102Z"/></clipPath>
<clipPath id="hu"><path d="M858 530L900 540L960 566L1040 604L1075 625L1020 645L858 645Z"/></clipPath>
</defs>
<g clip-path="url(#dr)" fill="none"><path d="M975 94.8L1180 70.6M975 104.4L1180 80.2M975 114L1180 89.8M975 123.6L1180 99.4M975 133.2L1180 109M975 142.8L1180 118.6M975 152.4L1180 128.2M975 162L1180 137.8M975 171.6L1180 147.4M975 181.2L1180 157M975 190.8L1180 166.6M975 200.4L1180 176.2M975 210L1180 185.8M975 219.6L1180 195.4M975 229.2L1180 205M975 238.8L1180 214.6M975 248.4L1180 224.2M975 258L1180 233.8M975 267.6L1180 243.4M975 277.2L1180 253M975 286.8L1180 262.6M975 296.4L1180 272.2M975 306L1180 281.8M975 315.6L1180 291.4M975 325.2L1180 301M975 334.8L1180 310.6M938 100L970 300M969 100L1001 300M1000 100L1032 300M1031 100L1063 300M1062 100L1094 300M1093 100L1125 300M1124 100L1156 300" stroke="#e4e2dd" stroke-width="2.200"/><path d="M975 94.8L1180 70.6M975 104.4L1180 80.2M975 114L1180 89.8M975 123.6L1180 99.4M975 133.2L1180 109M975 142.8L1180 118.6M975 152.4L1180 128.2M975 162L1180 137.8M975 171.6L1180 147.4M975 181.2L1180 157M975 190.8L1180 166.6M975 200.4L1180 176.2M975 210L1180 185.8M975 219.6L1180 195.4M975 229.2L1180 205M975 238.8L1180 214.6M975 248.4L1180 224.2M975 258L1180 233.8M975 267.6L1180 243.4M975 277.2L1180 253M975 286.8L1180 262.6M975 296.4L1180 272.2M975 306L1180 281.8M975 315.6L1180 291.4M975 325.2L1180 301M975 334.8L1180 310.6M938 100L970 300M969 100L1001 300M1000 100L1032 300M1031 100L1063 300M1062 100L1094 300M1093 100L1125 300M1124 100L1156 300" stroke="#f8f7f4" stroke-width="1.500"/></g>
<g clip-path="url(#rm)" fill="none"><path d="M975 258L1135 271.6M975 268.5L1135 282.1M975 279L1135 292.6M975 289.5L1135 303.1M975 300L1135 313.6M975 310.5L1135 324.1M975 321L1135 334.6M975 331.5L1135 345.1M975 342L1135 355.6M975 352.5L1135 366.1M975 363L1135 376.6M975 373.5L1135 387.1M975 384L1135 397.6M975 394.5L1135 408.1M975 405L1135 418.6M975 415.5L1135 429.1M1000 250L1045 400M1032 250L1077 400M1064 250L1109 400M1096 250L1141 400M1128 250L1173 400" stroke="#e4e2dd" stroke-width="2.200"/><path d="M975 258L1135 271.6M975 268.5L1135 282.1M975 279L1135 292.6M975 289.5L1135 303.1M975 300L1135 313.6M975 310.5L1135 324.1M975 321L1135 334.6M975 331.5L1135 345.1M975 342L1135 355.6M975 352.5L1135 366.1M975 363L1135 376.6M975 373.5L1135 387.1M975 384L1135 397.6M975 394.5L1135 408.1M975 405L1135 418.6M975 415.5L1135 429.1M1000 250L1045 400M1032 250L1077 400M1064 250L1109 400M1096 250L1141 400M1128 250L1173 400" stroke="#f8f7f4" stroke-width="1.500"/></g>
<g clip-path="url(#wk)" fill="none" opacity=".8"><path d="M858 290L1010 270M858 301L1010 281M858 312L1010 292M858 323L1010 303M858 334L1010 314M858 345L1010 325M858 356L1010 336M858 367L1010 347M858 378L1010 358M858 389L1010 369M858 400L1010 380M858 411L1010 391M858 422L1010 402M858 433L1010 413M880 260L890 400M914 260L924 400M948 260L958 400M982 260L992 400" stroke="#e4e2dd" stroke-width="2.200"/><path d="M858 290L1010 270M858 301L1010 281M858 312L1010 292M858 323L1010 303M858 334L1010 314M858 345L1010 325M858 356L1010 336M858 367L1010 347M858 378L1010 358M858 389L1010 369M858 400L1010 380M858 411L1010 391M858 422L1010 402M858 433L1010 413M880 260L890 400M914 260L924 400M948 260L958 400M982 260L992 400" stroke="#f8f7f4" stroke-width="1.400"/></g>
<g clip-path="url(#kr)" fill="none" opacity=".85"><path d="M880 258L1020 240M880 269L1020 251M880 280L1020 262M880 291L1020 273M880 302L1020 284M880 313L1020 295M880 324L1020 306M880 335L1020 317M880 346L1020 328M880 357L1020 339M880 368L1020 350M880 379L1020 361M880 390L1020 372M880 401L1020 383M880 412L1020 394M880 423L1020 405M905 250L945 400M932 250L972 400M959 250L999 400M986 250L1026 400M1013 250L1053 400" stroke="#e4e2dd" stroke-width="2.200"/><path d="M880 258L1020 240M880 269L1020 251M880 280L1020 262M880 291L1020 273M880 302L1020 284M880 313L1020 295M880 324L1020 306M880 335L1020 317M880 346L1020 328M880 357L1020 339M880 368L1020 350M880 379L1020 361M880 390L1020 372M880 401L1020 383M880 412L1020 394M880 423L1020 405M905 250L945 400M932 250L972 400M959 250L999 400M986 250L1026 400M1013 250L1053 400" stroke="#f8f7f4" stroke-width="1.400"/></g>
<g clip-path="url(#nw)" fill="none" opacity=".7"><path d="M858 122L1000 96M858 135L1000 109M858 148L1000 122M858 161L1000 135M858 174L1000 148M858 187L1000 161M858 200L1000 174M858 213L1000 187M858 226L1000 200M858 239L1000 213M858 252L1000 226M858 265L1000 239M880 100L905 250M908 100L933 250M936 100L961 250M964 100L989 250M992 100L1017 250" stroke="#e4e2dd" stroke-width="2.200"/><path d="M858 122L1000 96M858 135L1000 109M858 148L1000 122M858 161L1000 135M858 174L1000 148M858 187L1000 161M858 200L1000 174M858 213L1000 187M858 226L1000 200M858 239L1000 213M858 252L1000 226M858 265L1000 239M880 100L905 250M908 100L933 250M936 100L961 250M964 100L989 250M992 100L1017 250" stroke="#f8f7f4" stroke-width="1.400"/></g>
<g clip-path="url(#hu)" fill="none" opacity=".7"><path d="M858 520L1080 615M858 532L1080 627M858 544L1080 639M858 556L1080 651M858 568L1080 663M858 580L1080 675M858 592L1080 687M858 604L1080 699M858 616L1080 711M858 628L1080 723M858 640L1080 735M858 652L1080 747M870 645L915 530M900 645L945 530M930 645L975 530M960 645L1005 530M990 645L1035 530M1020 645L1065 530M1050 645L1095 530M1080 645L1125 530" stroke="#e4e2dd" stroke-width="2.200"/><path d="M858 520L1080 615M858 532L1080 627M858 544L1080 639M858 556L1080 651M858 568L1080 663M858 580L1080 675M858 592L1080 687M858 604L1080 699M858 616L1080 711M858 628L1080 723M858 640L1080 735M858 652L1080 747M870 645L915 530M900 645L945 530M930 645L975 530M960 645L1005 530M990 645L1035 530M1020 645L1065 530M1050 645L1095 530M1080 645L1125 530" stroke="#f8f7f4" stroke-width="1.400"/></g>
<g clip-path="url(#ot)" fill="none"><path d="M1040 240L1320 240L1320 620L1040 620Z" fill="#f4f0eb"/><path d="M1078 248.9L1321.3 285.4M1075.6 265L1318.9 301.5M1073.2 281.1L1316.4 317.6M1070.7 297.2L1314 333.7M1068.3 313.3L1311.6 349.8M1065.9 329.5L1309.2 366M1063.5 345.6L1306.8 382.1M1061.1 361.7L1304.4 398.2M1058.7 377.8L1301.9 414.3M1056.2 393.9L1299.5 430.4M1053.8 410.1L1297.1 446.6M1051.4 426.2L1294.7 462.7M1049 442.3L1292.3 478.8M1046.6 458.4L1289.8 494.9M1044.2 474.5L1287.4 511M1041.7 490.7L1285 527.2M1039.3 506.8L1282.6 543.3M1036.9 522.9L1280.2 559.4M1034.5 539L1277.8 575.5M1032.1 555.1L1275.3 591.6M1029.6 571.3L1272.9 607.8M1098.7 235.5L1047.9 574M1110.8 237.3L1060.1 575.8M1123 239.1L1072.2 577.6M1135.2 241L1084.4 579.5M1147.3 242.8L1096.5 581.3M1159.5 244.6L1108.7 583.1M1171.7 246.4L1120.9 584.9M1183.8 248.3L1133 586.8M1196 250.1L1145.2 588.6M1208.1 251.9L1157.4 590.4M1220.3 253.7L1169.5 592.2M1232.5 255.6L1181.7 594.1M1244.6 257.4L1193.9 595.9M1256.8 259.2L1206 597.7M1269 261L1218.2 599.5M1281.1 262.9L1230.3 601.4M1293.3 264.7L1242.5 603.2M1305.5 266.5L1254.7 605M1317.6 268.3L1266.8 606.8" stroke="#ebe6e1" stroke-width=".7"/><path d="M1079.2 240.8L1322.5 277.3M1076.8 256.9L1320.1 293.4M1074.4 273L1317.7 309.5M1072 289.2L1315.2 325.7M1069.5 305.3L1312.8 341.8M1067.1 321.4L1310.4 357.9M1064.7 337.5L1308 374M1062.3 353.6L1305.6 390.1M1059.9 369.8L1303.1 406.3M1057.5 385.9L1300.7 422.4M1055 402L1298.3 438.5M1052.6 418.1L1295.9 454.6M1050.2 434.2L1293.5 470.7M1047.8 450.4L1291.1 486.9M1045.4 466.5L1288.6 503M1042.9 482.6L1286.2 519.1M1040.5 498.7L1283.8 535.2M1038.1 514.8L1281.4 551.3M1035.7 531L1279 567.5M1033.3 547.1L1276.5 583.6M1030.9 563.2L1274.1 599.7M1092.6 234.6L1041.8 573.1M1104.7 236.4L1054 574.9M1116.9 238.2L1066.1 576.7M1129.1 240L1078.3 578.6M1141.2 241.9L1090.5 580.4M1153.4 243.7L1102.6 582.2M1165.6 245.5L1114.8 584M1177.7 247.3L1127 585.9M1189.9 249.2L1139.1 587.7M1202.1 251L1151.3 589.5M1214.2 252.8L1163.4 591.3M1226.4 254.6L1175.6 593.2M1238.6 256.5L1187.8 595M1250.7 258.3L1199.9 596.8M1262.9 260.1L1212.1 598.6M1275 261.9L1224.3 600.5M1287.2 263.8L1236.4 602.3M1299.4 265.6L1248.6 604.1M1311.5 267.4L1260.8 605.9" stroke="#e2ddd6" stroke-width="2.600"/><path d="M1079.2 240.8L1322.5 277.3M1076.8 256.9L1320.1 293.4M1074.4 273L1317.7 309.5M1072 289.2L1315.2 325.7M1069.5 305.3L1312.8 341.8M1067.1 321.4L1310.4 357.9M1064.7 337.5L1308 374M1062.3 353.6L1305.6 390.1M1059.9 369.8L1303.1 406.3M1057.5 385.9L1300.7 422.4M1055 402L1298.3 438.5M1052.6 418.1L1295.9 454.6M1050.2 434.2L1293.5 470.7M1047.8 450.4L1291.1 486.9M1045.4 466.5L1288.6 503M1042.9 482.6L1286.2 519.1M1040.5 498.7L1283.8 535.2M1038.1 514.8L1281.4 551.3M1035.7 531L1279 567.5M1033.3 547.1L1276.5 583.6M1030.9 563.2L1274.1 599.7M1092.6 234.6L1041.8 573.1M1104.7 236.4L1054 574.9M1116.9 238.2L1066.1 576.7M1129.1 240L1078.3 578.6M1141.2 241.9L1090.5 580.4M1153.4 243.7L1102.6 582.2M1165.6 245.5L1114.8 584M1177.7 247.3L1127 585.9M1189.9 249.2L1139.1 587.7M1202.1 251L1151.3 589.5M1214.2 252.8L1163.4 591.3M1226.4 254.6L1175.6 593.2M1238.6 256.5L1187.8 595M1250.7 258.3L1199.9 596.8M1262.9 260.1L1212.1 598.6M1275 261.9L1224.3 600.5M1287.2 263.8L1236.4 602.3M1299.4 265.6L1248.6 604.1M1311.5 267.4L1260.8 605.9" stroke="#fbfaf7" stroke-width="1.800"/><path d="M1125.5 346.6L1283.7 370.4M1123.1 362.8L1281.2 386.5M1120.7 378.9L1278.8 402.6M1118.3 395L1276.4 418.7M1115.9 411.1L1274 434.8M1113.4 427.2L1271.6 451M1111 443.4L1269.1 467.1M1126.2 341.8L1110.5 446.6M1138.4 343.6L1122.7 448.4M1150.6 345.5L1134.9 450.2M1162.7 347.3L1147 452.1M1174.9 349.1L1159.2 453.9M1187.1 350.9L1171.4 455.7M1199.2 352.8L1183.5 457.5M1211.4 354.6L1195.7 459.4M1223.6 356.4L1207.8 461.2M1235.7 358.2L1220 463M1247.9 360.1L1232.2 464.8M1260.1 361.9L1244.3 466.7M1272.2 363.7L1256.5 468.5M1284.4 365.5L1268.7 470.3" stroke="#eee2a8" stroke-width="3"/><path d="M1125.5 346.6L1283.7 370.4M1123.1 362.8L1281.2 386.5M1120.7 378.9L1278.8 402.6M1118.3 395L1276.4 418.7M1115.9 411.1L1274 434.8M1113.4 427.2L1271.6 451M1111 443.4L1269.1 467.1M1126.2 341.8L1110.5 446.6M1138.4 343.6L1122.7 448.4M1150.6 345.5L1134.9 450.2M1162.7 347.3L1147 452.1M1174.9 349.1L1159.2 453.9M1187.1 350.9L1171.4 455.7M1199.2 352.8L1183.5 457.5M1211.4 354.6L1195.7 459.4M1223.6 356.4L1207.8 461.2M1235.7 358.2L1220 463M1247.9 360.1L1232.2 464.8M1260.1 361.9L1244.3 466.7M1272.2 363.7L1256.5 468.5M1284.4 365.5L1268.7 470.3" stroke="#f6e8aa" stroke-width="2.300"/></g>
<path d="M1110 452L1143 457L1128 575L1105 570Z" fill="#efefec" opacity=".5"/>
<g fill="none" stroke-linecap="round" stroke-linejoin="round">
<path d="M1141.2 240C1139.3 247.1 1134.7 269.6 1129.7 282.5C1124.7 295.4 1120.1 303.7 1111.3 317.1C1102.5 330.5 1086.3 350.8 1076.7 363.1C1067.1 375.4 1061.5 383.3 1053.7 390.8C1045.9 398.3 1040.6 403.5 1030 408C1019.4 412.5 1005 417 990 418C975 419 955 415.3 940 414C925 412.7 913.7 411 900 410C886.3 409 865 408.3 858 408" stroke="#e9e9e6" stroke-width="5"/>
<path d="M1141 240C1142.5 233.3 1147.2 215 1150 200C1152.8 185 1157.7 166.3 1158 150C1158.3 133.7 1153 110 1152 102" stroke="#ecece9" stroke-width="4"/>
<path d="M1053.7 390.8C1056.4 399 1065.3 421.8 1070 440C1074.7 458.2 1083.7 480 1082 500C1080.3 520 1063.7 550 1060 560" stroke="#e3e4e2" stroke-width="4"/>
<g stroke="#ebdb98"><path d="M985.8 100C986.6 104.6 989.2 119.5 990.4 127.6C991.5 135.7 993.3 142.6 992.7 148.4C992.1 154.2 989.2 157.2 986.9 162.2C984.6 167.2 980.4 173.3 978.9 178.3C977.4 183.3 977.5 187.1 977.7 192.1C977.9 197.1 979 202 980 208.2C981 214.3 983.1 222.4 983.5 229C983.9 235.6 981.7 239.1 982.3 248C982.9 256.9 984.6 271.8 986.9 282.5C989.2 293.2 993.1 302.9 996.2 312.5C999.3 322.1 1002.3 330.9 1005.4 340.1C1008.5 349.3 1011.9 358.4 1014.6 367.7C1017.3 377 1020.4 391.3 1021.5 396" stroke-width="4.5"/><path d="M1035.3 100C1034.5 103.8 1032.5 115.3 1030.5 123C1028.5 130.7 1025.8 138.3 1023.5 146C1021.2 153.7 1018.3 161.3 1017 169C1015.7 176.7 1015.7 185.6 1015.7 192.1C1015.7 198.6 1016.3 202 1016.9 208.2C1017.5 214.3 1018.8 222.4 1019.2 229C1019.6 235.6 1018.1 239.1 1019.2 248C1020.4 256.9 1023.6 271 1026.1 282.5C1028.6 294 1031.4 306 1034.1 317.1C1036.8 328.2 1039.7 337.8 1042.2 349.3C1044.7 360.8 1047.8 378.1 1049.1 386.2C1050.4 394.3 1050.1 396 1050.3 398" stroke-width="4.9"/><path d="M1064.1 100C1064.9 105.8 1067 123 1068.7 134.5C1070.4 146 1072.7 157.9 1074.4 169C1076.1 180.1 1077.3 191.3 1079 201.3C1080.7 211.3 1083.2 221.2 1084.8 229C1086.3 236.8 1087.3 241 1088.3 248C1089.3 255 1089.8 263.7 1090.6 271C1091.4 278.3 1092.5 288.2 1092.9 291.7" stroke-width="4.5"/><path d="M978.9 210C985.6 209.5 1002.5 208.4 1019.2 207C1035.9 205.6 1055.6 204 1079 201.3C1102.4 198.6 1142.7 192.9 1159.6 191C1176.5 189.1 1170 191.1 1180.4 189.8C1190.8 188.5 1214.9 184.1 1221.8 183" stroke-width="4.7"/><path d="M858 127.6C863.8 130.7 881 137.2 892.5 146C904 154.8 917.4 170.2 927 180.6C936.6 191 940.8 198.6 950 208.2C959.2 217.8 975.4 231.6 982.3 238.2C989.2 244.8 984.6 243.7 991.5 248C998.4 252.3 1011.5 257.6 1023.8 264.1C1036.1 270.6 1052.5 280.4 1065.2 287.1C1077.9 293.8 1089 299.8 1099.8 304.4C1110.5 309 1124.7 313.1 1129.7 314.8" stroke-width="4.7"/><path d="M856 222C858.6 224.7 867.6 233.9 871.8 238.2C876 242.5 873.7 239.5 881 248C888.3 256.5 904.1 276.3 915.6 289.4C927.1 302.4 938.2 314 950.1 326.3C962 338.6 977.8 353.1 987 363.1C996.2 373.1 1000 381.1 1005.4 386.2C1010.8 391.3 1011.2 391.4 1019.2 393.8C1027.2 396.2 1038.4 398 1053.7 400.7C1069 403.4 1090.2 406.6 1111.3 409.9C1132.4 413.2 1162 417.6 1180.4 420.3C1198.9 423 1215.1 425.1 1222 426" stroke-width="4.9"/><path d="M858 297.5 L915.6 296.4" stroke-width="4.3"/><path d="M858 294C859.9 297.8 866.4 307.4 869.5 317C872.6 326.6 876 338.4 876.4 351.6C876.8 364.8 874.5 384.6 871.8 396C869.1 407.4 862 416 860 420" stroke-width="4.3"/><path d="M1196.5 100C1195.7 107.7 1194.6 134.5 1191.9 146C1189.2 157.5 1184.2 163.7 1180.4 169C1176.6 174.3 1170.8 176.5 1168.9 178" stroke-width="4.3"/><path d="M1180.4 192C1183.5 198.2 1195 219.7 1198.8 229C1202.6 238.3 1199.5 237.9 1203.4 248C1207.3 258.1 1218.9 282.8 1222 289.8" stroke-width="4.3"/><path d="M1241.9 100C1241.7 105.8 1241.9 123.7 1240.7 134.5C1239.5 145.3 1236.6 155.8 1235 165C1233.4 174.2 1231.7 185.8 1231 190" stroke-width="6.3"/><path d="M1232 185C1231.3 190 1229 205 1228 215C1227 225 1227 235.8 1226 245C1225 254.2 1222.7 262.5 1222 270C1221.3 277.5 1222 286.5 1222 289.8" stroke-width="4.7"/><path d="M1234 185C1233.9 190 1233.7 205 1233.5 215C1233.3 225 1233.9 236.2 1233 245C1232.1 253.8 1229.7 261.3 1228 268C1226.3 274.7 1223.8 282.2 1223 285" stroke-width="4.7"/><path d="M1196.5 227.8C1200 227.9 1225 228.5 1232 229C1239 229.5 1262.2 231.9 1266 233C1269.8 234.1 1270 236.5 1270.5 240C1271 243.5 1271 265.2 1271 268" stroke-width="4.3"/><path d="M1222 289.8C1221 296.8 1213.8 348.5 1212 359.5C1210.2 370.5 1206.1 391.1 1204.5 400C1202.9 408.9 1197.5 439.5 1195.6 449C1193.6 458.5 1186.6 486.9 1185 495C1183.4 503.1 1180.3 523 1179.4 530C1178.5 537 1176.8 558.1 1175.9 565.1C1175 572.1 1172.2 594 1170.6 600.3C1169 606.6 1161.9 623.9 1160 628.4C1158.1 632.9 1152.2 643.3 1151.3 645" stroke-width="4.9"/><path d="M1172.2 284.8C1171.4 289.8 1165.9 323.5 1164 335C1162.1 346.5 1155.4 388.6 1153.5 400C1151.6 411.4 1146.4 439.5 1144.9 449C1143.4 458.5 1140.3 485.8 1138.9 495C1137.5 504.2 1132.5 532.5 1131 541C1129.5 549.5 1124.7 576.1 1124 580" stroke-width="4.9"/><path d="M1184.6 284.8C1183.7 289.8 1178 323.5 1176 335C1174 346.5 1166.5 388.6 1164.7 400C1162.9 411.4 1159 439.5 1157.6 449C1156.2 458.5 1151.9 485.8 1150.4 495C1148.9 504.2 1144.4 532.5 1143 541C1141.6 549.5 1136.7 576.1 1136 580" stroke-width="4.9"/><path d="M1174 250C1173.8 253.3 1172.8 264.2 1172.5 270C1172.2 275.8 1172.2 282.3 1172.2 284.8" stroke-width="4.7"/><path d="M1175.5 250C1176.2 253 1178.5 262.2 1180 268C1181.5 273.8 1183.8 282 1184.6 284.8" stroke-width="4.7"/><path d="M1139 264C1137.9 266.8 1132.2 280.5 1131 285C1129.8 289.5 1130.8 290 1130 298C1129.2 306 1126.7 331.4 1125 345C1123.3 358.6 1119.1 387.3 1117.4 400C1115.7 412.7 1112.7 434.7 1112 440" stroke-width="4.3"/><path d="M1156 220C1153.7 224.2 1146.7 237 1142 245C1137.3 253 1131.6 262.5 1128 268C1124.4 273.5 1121.5 276.3 1120.2 278" stroke-width="4.3"/><path d="M1269.2 240C1268.2 245.7 1261.3 285.2 1259.3 297.2C1257.3 309.1 1251 349.2 1249.3 359.5C1247.6 369.8 1243.7 391.1 1241.9 400C1240.1 408.9 1233.2 438 1231.2 449C1229.2 460 1222.9 503.9 1222 510" stroke-width="4.3"/><path d="M1286 357C1285.3 361.3 1281.1 389.2 1279.4 400C1277.7 410.8 1271.1 452.7 1269.2 464.7C1267.3 476.7 1261.4 514.5 1260.5 520" stroke-width="4.3"/><path d="M1139 264C1142.6 264 1154.8 263.9 1160.6 264C1166.4 264.1 1171.8 264.4 1174 264.5" stroke-width="4.3"/><path d="M1172 286C1180.3 287.2 1207.5 290.7 1222 293C1236.5 295.3 1252.8 298.6 1259 299.7" stroke-width="4.3"/><path d="M1132.4 297.2C1146.9 298.9 1194.2 304.3 1219.5 307.2C1244.8 310.1 1273.4 313.4 1284.2 314.7" stroke-width="4.3"/><path d="M1132.4 329.6C1145.7 331.7 1186.3 338.1 1212 342C1237.7 345.9 1274.2 351.3 1286.7 353.2" stroke-width="4.3"/><path d="M1056 436.4C1064.8 438.1 1084.4 443 1109 446.8C1133.6 450.6 1175.2 455.1 1203.4 459C1231.6 462.9 1265.6 468.2 1278 470" stroke-width="4.7"/><path d="M1144 503.5C1157 505.5 1201.3 512.6 1222 515.7C1242.7 518.8 1260.3 521 1268 522" stroke-width="4.3"/><path d="M858 400.7C865.7 402.2 888.6 406.6 904 410C919.4 413.4 934.7 418.7 950.1 421.4C965.5 424.1 982.4 424.6 996.2 426C1010 427.4 1023 427.8 1033 429.5C1043 431.2 1052.2 435.2 1056 436.4" stroke-width="5.7"/><path d="M858 469C865.2 470.3 883.4 473.5 901.5 476.6C919.6 479.7 948.7 485 966.8 487.5C984.9 490 996.9 490.9 1010.3 491.8C1023.7 492.7 1041.1 492.7 1047.3 492.9" stroke-width="5.1"/><path d="M1047.3 492.9C1047.8 488.2 1049.3 473.9 1050 465C1050.7 456.1 1051.4 443.8 1051.7 439.6" stroke-width="4.7"/><path d="M964.6 463.5C967.1 461.7 973.7 455.9 979.9 452.6C986.1 449.3 996.2 447.1 1001.6 443.9C1007 440.6 1010.5 435.9 1012.5 433.1C1014.5 430.3 1013.4 428 1013.6 427" stroke-width="4.5"/><path d="M884.1 441.8C890.6 442.1 912.4 442.1 923.3 443.9C934.2 445.7 942.5 449.3 949.4 452.6C956.3 455.9 961.7 457.7 964.6 463.5C967.5 469.3 967.1 481 966.8 487.5C966.4 494 962.9 497.3 962.5 502.7C962.1 508.1 962.5 515.6 964.6 520.1C966.7 524.6 973.3 528.4 975 530" stroke-width="4.5"/><path d="M1179.4 562.5C1180.6 562.6 1214.9 566.2 1216.3 565.1C1217.7 564 1221.4 531.2 1221.6 530" stroke-width="3.9"/><path d="M1146 573.9 L1175.9 575.7" stroke-width="3.9"/><path d="M1055.8 387.1C1065.4 388.1 1092.6 390.7 1113.3 393.3C1134 395.9 1168.9 401.1 1180 402.7" stroke-width="4.3"/><path d="M1066.7 421.3C1074.5 422.3 1094.4 424.9 1113.3 427.5C1132.2 430.1 1168.9 435.3 1180 436.9" stroke-width="4.3"/><path d="M1058.9 405.8 L1074.4 435.3" stroke-width="4.1"/><path d="M1097.8 413.5 L1082.2 438.4" stroke-width="4.1"/><path d="M1053.4 432.2 L1055 470" stroke-width="4.3"/><path d="M858 541C865.7 545.2 888.6 557.2 904 566.4C919.4 575.6 938.6 586.7 950.1 596.3C961.6 605.9 965.4 615.9 973.1 624C980.8 632.1 992.4 641.5 996.2 645" stroke-width="4.5"/><path d="M858 605.5C859.1 608.6 863.4 617.4 864.9 624C866.4 630.6 866.8 641.5 867.2 645" stroke-width="4.3"/><path d="M1019.2 645C1025 642.3 1042.2 634.4 1053.7 628.6C1065.2 622.8 1082.5 613.3 1088.3 610.2" stroke-width="5.3"/><path d="M876.7 340C876.1 346.2 873.9 367.4 872.9 377.3C871.9 387.2 871.3 396 871 399.7" stroke-width="4.3"/><path d="M895.3 407.2C894.7 410.6 893.8 422.1 891.6 427.7C889.4 433.3 886 435.4 882.3 440.8C878.6 446.2 871.4 456.8 869.2 460" stroke-width="4.9"/><path d="M1068 383C1064.1 386.1 1053.2 396.3 1044.7 401.6C1036.2 406.9 1025.4 411.3 1016.7 414.7C1008 418.1 996.5 420.9 992.4 422.1" stroke-width="4.3"/><path d="M908 403C908.3 401.2 908.3 394.6 910 392C911.7 389.4 915.2 387.7 918 387.5C920.8 387.3 925 388.6 927 391C929 393.4 930.2 398.5 930 402C929.8 405.5 926.7 410.3 926 412" stroke-width="4.1"/></g>
<g stroke="#f6e8aa"><path d="M985.8 100C986.6 104.6 989.2 119.5 990.4 127.6C991.5 135.7 993.3 142.6 992.7 148.4C992.1 154.2 989.2 157.2 986.9 162.2C984.6 167.2 980.4 173.3 978.9 178.3C977.4 183.3 977.5 187.1 977.7 192.1C977.9 197.1 979 202 980 208.2C981 214.3 983.1 222.4 983.5 229C983.9 235.6 981.7 239.1 982.3 248C982.9 256.9 984.6 271.8 986.9 282.5C989.2 293.2 993.1 302.9 996.2 312.5C999.3 322.1 1002.3 330.9 1005.4 340.1C1008.5 349.3 1011.9 358.4 1014.6 367.7C1017.3 377 1020.4 391.3 1021.5 396" stroke-width="3.5"/><path d="M1035.3 100C1034.5 103.8 1032.5 115.3 1030.5 123C1028.5 130.7 1025.8 138.3 1023.5 146C1021.2 153.7 1018.3 161.3 1017 169C1015.7 176.7 1015.7 185.6 1015.7 192.1C1015.7 198.6 1016.3 202 1016.9 208.2C1017.5 214.3 1018.8 222.4 1019.2 229C1019.6 235.6 1018.1 239.1 1019.2 248C1020.4 256.9 1023.6 271 1026.1 282.5C1028.6 294 1031.4 306 1034.1 317.1C1036.8 328.2 1039.7 337.8 1042.2 349.3C1044.7 360.8 1047.8 378.1 1049.1 386.2C1050.4 394.3 1050.1 396 1050.3 398" stroke-width="3.9"/><path d="M1064.1 100C1064.9 105.8 1067 123 1068.7 134.5C1070.4 146 1072.7 157.9 1074.4 169C1076.1 180.1 1077.3 191.3 1079 201.3C1080.7 211.3 1083.2 221.2 1084.8 229C1086.3 236.8 1087.3 241 1088.3 248C1089.3 255 1089.8 263.7 1090.6 271C1091.4 278.3 1092.5 288.2 1092.9 291.7" stroke-width="3.5"/><path d="M978.9 210C985.6 209.5 1002.5 208.4 1019.2 207C1035.9 205.6 1055.6 204 1079 201.3C1102.4 198.6 1142.7 192.9 1159.6 191C1176.5 189.1 1170 191.1 1180.4 189.8C1190.8 188.5 1214.9 184.1 1221.8 183" stroke-width="3.7"/><path d="M858 127.6C863.8 130.7 881 137.2 892.5 146C904 154.8 917.4 170.2 927 180.6C936.6 191 940.8 198.6 950 208.2C959.2 217.8 975.4 231.6 982.3 238.2C989.2 244.8 984.6 243.7 991.5 248C998.4 252.3 1011.5 257.6 1023.8 264.1C1036.1 270.6 1052.5 280.4 1065.2 287.1C1077.9 293.8 1089 299.8 1099.8 304.4C1110.5 309 1124.7 313.1 1129.7 314.8" stroke-width="3.7"/><path d="M856 222C858.6 224.7 867.6 233.9 871.8 238.2C876 242.5 873.7 239.5 881 248C888.3 256.5 904.1 276.3 915.6 289.4C927.1 302.4 938.2 314 950.1 326.3C962 338.6 977.8 353.1 987 363.1C996.2 373.1 1000 381.1 1005.4 386.2C1010.8 391.3 1011.2 391.4 1019.2 393.8C1027.2 396.2 1038.4 398 1053.7 400.7C1069 403.4 1090.2 406.6 1111.3 409.9C1132.4 413.2 1162 417.6 1180.4 420.3C1198.9 423 1215.1 425.1 1222 426" stroke-width="3.9"/><path d="M858 297.5 L915.6 296.4" stroke-width="3.3"/><path d="M858 294C859.9 297.8 866.4 307.4 869.5 317C872.6 326.6 876 338.4 876.4 351.6C876.8 364.8 874.5 384.6 871.8 396C869.1 407.4 862 416 860 420" stroke-width="3.3"/><path d="M1196.5 100C1195.7 107.7 1194.6 134.5 1191.9 146C1189.2 157.5 1184.2 163.7 1180.4 169C1176.6 174.3 1170.8 176.5 1168.9 178" stroke-width="3.3"/><path d="M1180.4 192C1183.5 198.2 1195 219.7 1198.8 229C1202.6 238.3 1199.5 237.9 1203.4 248C1207.3 258.1 1218.9 282.8 1222 289.8" stroke-width="3.3"/><path d="M1241.9 100C1241.7 105.8 1241.9 123.7 1240.7 134.5C1239.5 145.3 1236.6 155.8 1235 165C1233.4 174.2 1231.7 185.8 1231 190" stroke-width="5.3"/><path d="M1232 185C1231.3 190 1229 205 1228 215C1227 225 1227 235.8 1226 245C1225 254.2 1222.7 262.5 1222 270C1221.3 277.5 1222 286.5 1222 289.8" stroke-width="3.7"/><path d="M1234 185C1233.9 190 1233.7 205 1233.5 215C1233.3 225 1233.9 236.2 1233 245C1232.1 253.8 1229.7 261.3 1228 268C1226.3 274.7 1223.8 282.2 1223 285" stroke-width="3.7"/><path d="M1196.5 227.8C1200 227.9 1225 228.5 1232 229C1239 229.5 1262.2 231.9 1266 233C1269.8 234.1 1270 236.5 1270.5 240C1271 243.5 1271 265.2 1271 268" stroke-width="3.3"/><path d="M1222 289.8C1221 296.8 1213.8 348.5 1212 359.5C1210.2 370.5 1206.1 391.1 1204.5 400C1202.9 408.9 1197.5 439.5 1195.6 449C1193.6 458.5 1186.6 486.9 1185 495C1183.4 503.1 1180.3 523 1179.4 530C1178.5 537 1176.8 558.1 1175.9 565.1C1175 572.1 1172.2 594 1170.6 600.3C1169 606.6 1161.9 623.9 1160 628.4C1158.1 632.9 1152.2 643.3 1151.3 645" stroke-width="3.9"/><path d="M1172.2 284.8C1171.4 289.8 1165.9 323.5 1164 335C1162.1 346.5 1155.4 388.6 1153.5 400C1151.6 411.4 1146.4 439.5 1144.9 449C1143.4 458.5 1140.3 485.8 1138.9 495C1137.5 504.2 1132.5 532.5 1131 541C1129.5 549.5 1124.7 576.1 1124 580" stroke-width="3.9"/><path d="M1184.6 284.8C1183.7 289.8 1178 323.5 1176 335C1174 346.5 1166.5 388.6 1164.7 400C1162.9 411.4 1159 439.5 1157.6 449C1156.2 458.5 1151.9 485.8 1150.4 495C1148.9 504.2 1144.4 532.5 1143 541C1141.6 549.5 1136.7 576.1 1136 580" stroke-width="3.9"/><path d="M1174 250C1173.8 253.3 1172.8 264.2 1172.5 270C1172.2 275.8 1172.2 282.3 1172.2 284.8" stroke-width="3.7"/><path d="M1175.5 250C1176.2 253 1178.5 262.2 1180 268C1181.5 273.8 1183.8 282 1184.6 284.8" stroke-width="3.7"/><path d="M1139 264C1137.9 266.8 1132.2 280.5 1131 285C1129.8 289.5 1130.8 290 1130 298C1129.2 306 1126.7 331.4 1125 345C1123.3 358.6 1119.1 387.3 1117.4 400C1115.7 412.7 1112.7 434.7 1112 440" stroke-width="3.3"/><path d="M1156 220C1153.7 224.2 1146.7 237 1142 245C1137.3 253 1131.6 262.5 1128 268C1124.4 273.5 1121.5 276.3 1120.2 278" stroke-width="3.3"/><path d="M1269.2 240C1268.2 245.7 1261.3 285.2 1259.3 297.2C1257.3 309.1 1251 349.2 1249.3 359.5C1247.6 369.8 1243.7 391.1 1241.9 400C1240.1 408.9 1233.2 438 1231.2 449C1229.2 460 1222.9 503.9 1222 510" stroke-width="3.3"/><path d="M1286 357C1285.3 361.3 1281.1 389.2 1279.4 400C1277.7 410.8 1271.1 452.7 1269.2 464.7C1267.3 476.7 1261.4 514.5 1260.5 520" stroke-width="3.3"/><path d="M1139 264C1142.6 264 1154.8 263.9 1160.6 264C1166.4 264.1 1171.8 264.4 1174 264.5" stroke-width="3.3"/><path d="M1172 286C1180.3 287.2 1207.5 290.7 1222 293C1236.5 295.3 1252.8 298.6 1259 299.7" stroke-width="3.3"/><path d="M1132.4 297.2C1146.9 298.9 1194.2 304.3 1219.5 307.2C1244.8 310.1 1273.4 313.4 1284.2 314.7" stroke-width="3.3"/><path d="M1132.4 329.6C1145.7 331.7 1186.3 338.1 1212 342C1237.7 345.9 1274.2 351.3 1286.7 353.2" stroke-width="3.3"/><path d="M1056 436.4C1064.8 438.1 1084.4 443 1109 446.8C1133.6 450.6 1175.2 455.1 1203.4 459C1231.6 462.9 1265.6 468.2 1278 470" stroke-width="3.7"/><path d="M1144 503.5C1157 505.5 1201.3 512.6 1222 515.7C1242.7 518.8 1260.3 521 1268 522" stroke-width="3.3"/><path d="M858 400.7C865.7 402.2 888.6 406.6 904 410C919.4 413.4 934.7 418.7 950.1 421.4C965.5 424.1 982.4 424.6 996.2 426C1010 427.4 1023 427.8 1033 429.5C1043 431.2 1052.2 435.2 1056 436.4" stroke-width="4.7"/><path d="M858 469C865.2 470.3 883.4 473.5 901.5 476.6C919.6 479.7 948.7 485 966.8 487.5C984.9 490 996.9 490.9 1010.3 491.8C1023.7 492.7 1041.1 492.7 1047.3 492.9" stroke-width="4.1"/><path d="M1047.3 492.9C1047.8 488.2 1049.3 473.9 1050 465C1050.7 456.1 1051.4 443.8 1051.7 439.6" stroke-width="3.7"/><path d="M964.6 463.5C967.1 461.7 973.7 455.9 979.9 452.6C986.1 449.3 996.2 447.1 1001.6 443.9C1007 440.6 1010.5 435.9 1012.5 433.1C1014.5 430.3 1013.4 428 1013.6 427" stroke-width="3.5"/><path d="M884.1 441.8C890.6 442.1 912.4 442.1 923.3 443.9C934.2 445.7 942.5 449.3 949.4 452.6C956.3 455.9 961.7 457.7 964.6 463.5C967.5 469.3 967.1 481 966.8 487.5C966.4 494 962.9 497.3 962.5 502.7C962.1 508.1 962.5 515.6 964.6 520.1C966.7 524.6 973.3 528.4 975 530" stroke-width="3.5"/><path d="M1179.4 562.5C1180.6 562.6 1214.9 566.2 1216.3 565.1C1217.7 564 1221.4 531.2 1221.6 530" stroke-width="2.9"/><path d="M1146 573.9 L1175.9 575.7" stroke-width="2.9"/><path d="M1055.8 387.1C1065.4 388.1 1092.6 390.7 1113.3 393.3C1134 395.9 1168.9 401.1 1180 402.7" stroke-width="3.3"/><path d="M1066.7 421.3C1074.5 422.3 1094.4 424.9 1113.3 427.5C1132.2 430.1 1168.9 435.3 1180 436.9" stroke-width="3.3"/><path d="M1058.9 405.8 L1074.4 435.3" stroke-width="3.1"/><path d="M1097.8 413.5 L1082.2 438.4" stroke-width="3.1"/><path d="M1053.4 432.2 L1055 470" stroke-width="3.3"/><path d="M858 541C865.7 545.2 888.6 557.2 904 566.4C919.4 575.6 938.6 586.7 950.1 596.3C961.6 605.9 965.4 615.9 973.1 624C980.8 632.1 992.4 641.5 996.2 645" stroke-width="3.5"/><path d="M858 605.5C859.1 608.6 863.4 617.4 864.9 624C866.4 630.6 866.8 641.5 867.2 645" stroke-width="3.3"/><path d="M1019.2 645C1025 642.3 1042.2 634.4 1053.7 628.6C1065.2 622.8 1082.5 613.3 1088.3 610.2" stroke-width="4.3"/><path d="M876.7 340C876.1 346.2 873.9 367.4 872.9 377.3C871.9 387.2 871.3 396 871 399.7" stroke-width="3.3"/><path d="M895.3 407.2C894.7 410.6 893.8 422.1 891.6 427.7C889.4 433.3 886 435.4 882.3 440.8C878.6 446.2 871.4 456.8 869.2 460" stroke-width="3.9"/><path d="M1068 383C1064.1 386.1 1053.2 396.3 1044.7 401.6C1036.2 406.9 1025.4 411.3 1016.7 414.7C1008 418.1 996.5 420.9 992.4 422.1" stroke-width="3.3"/><path d="M908 403C908.3 401.2 908.3 394.6 910 392C911.7 389.4 915.2 387.7 918 387.5C920.8 387.3 925 388.6 927 391C929 393.4 930.2 398.5 930 402C929.8 405.5 926.7 410.3 926 412" stroke-width="3.1"/></g>
<path d="M1159.6 100C1160.4 105.8 1162.8 123 1164.2 134.5C1165.6 146 1166.4 157.5 1167.7 169C1169 180.5 1170.8 190.4 1172.3 203.6C1173.8 216.8 1176.1 240.6 1176.9 248" stroke="#ebdb98" stroke-width="9"/><path d="M1159.6 100C1160.4 105.8 1162.8 123 1164.2 134.5C1165.6 146 1166.4 157.5 1167.7 169C1169 180.5 1170.8 190.4 1172.3 203.6C1173.8 216.8 1176.1 240.6 1176.9 248" stroke="#f6e8aa" stroke-width="8"/><path d="M1159.6 100C1160.4 105.8 1162.8 123 1164.2 134.5C1165.6 146 1166.4 157.5 1167.7 169C1169 180.5 1170.8 190.4 1172.3 203.6C1173.8 216.8 1176.1 240.6 1176.9 248" stroke="#f1e3a4" stroke-width="1"/>
<g stroke="#f2ca8c"><path d="M850 502.7C858.6 503.6 885.7 504.1 901.5 508.1C917.3 512.1 930.5 519.9 945 526.6C959.5 533.3 977 542.8 988.6 548.4C1000.2 554 1006.1 557.1 1014.7 560C1023.3 562.9 1030.8 564 1040 566C1049.2 568 1065 571 1070 572" stroke-width="20"/><path d="M1150 590.5C1155 590.8 1166.7 591 1180 592.5C1193.3 594 1211.8 597.2 1230 599.4C1248.2 601.6 1267.7 604.6 1289 605.5C1310.3 606.4 1335 605.6 1358 605C1381 604.4 1407.8 603.6 1427 602C1446.2 600.4 1465.3 596.6 1473 595.5" stroke-width="14.5"/><path d="M1538.9 100C1539.1 105.8 1540 123 1540 134.5C1540 146 1540.1 159.4 1538.9 169C1537.8 178.6 1534.6 184.4 1533.1 192.1C1531.6 199.8 1531.2 205.8 1529.7 215.1C1528.2 224.4 1525.9 238.7 1523.9 248C1521.9 257.3 1521.2 263.3 1517.9 271C1514.6 278.7 1508.7 286.3 1504.1 294C1499.5 301.7 1494.1 309.3 1490.3 317C1486.5 324.7 1483.2 332.4 1481.1 340.1C1479 347.8 1478.3 353.3 1477.6 363.1C1476.9 372.9 1476.4 384.9 1476.8 399C1477.2 413.1 1477.9 434.4 1480.1 448C1482.3 461.6 1486.1 471.2 1489.9 480.7C1493.7 490.2 1500.8 500.9 1503 505" stroke-width="7.5"/><path d="M1503 505C1504.5 507.8 1509.3 516.5 1512 522C1514.7 527.5 1517.8 535.3 1519 538" stroke-width="10"/><path d="M1519 533C1523.3 534.3 1533.2 538.3 1545 541C1556.8 543.7 1582.5 547.7 1590 549" stroke-width="11"/><path d="M1541 136C1542.2 138 1545.5 144.5 1548 148C1550.5 151.5 1554.7 155.5 1556 157" stroke-width="2.6"/><path d="M1541 190C1541.8 187.7 1544.8 179.3 1546 176C1547.2 172.7 1547.7 171 1548 170" stroke-width="2.6"/></g>
<g fill="#f2ca8c" stroke="none">
<path d="M856 454C859.2 447.7 874.7 450.5 880 451C885.3 451.5 893.6 455.2 896 458C898.4 460.8 898.8 468.3 898 472C897.2 475.7 893.2 482.7 890 486C886.8 489.3 878.5 495.4 874 497C869.5 498.6 858.4 503.7 856 498C853.6 492.3 852.8 460.3 856 454Z"/>
<path d="M1060 562C1065 560.3 1083.3 565.6 1088 565.1C1092.7 564.6 1096.4 559.1 1100.3 558.1C1104.2 557.1 1118.1 555.9 1121.4 556.4C1124.7 556.9 1126.3 560.5 1128.4 562.5C1130.5 564.5 1136.1 571.7 1139 573.9C1141.9 576.1 1149.3 579.8 1153 581C1156.7 582.2 1167.4 583.9 1170.6 584.5C1173.8 585.1 1178.9 584.2 1180 586C1181.1 587.8 1181.5 597.8 1180 599.5C1178.5 601.2 1171.5 600.2 1167.1 600.3C1162.7 600.4 1147 599.1 1142.5 600.3C1138 601.5 1131.7 609.2 1128.4 610.8C1125.1 612.4 1119.1 614.2 1114.4 614.4C1109.7 614.6 1093.1 613 1088 612.6C1082.9 612.2 1073.9 611.8 1070.4 610.8C1066.9 609.8 1059.7 606.2 1058.1 603.8C1056.5 601.3 1057.9 592.6 1056.4 589.8C1054.9 587 1044.6 583.2 1045 580C1045.4 576.8 1055 563.7 1060 562Z"/>
<path d="M1513.5 540.9C1514.2 538.8 1521 531 1523.7 530.7C1526.5 530.4 1541.3 536 1546.5 537C1551.7 538 1582.7 533.1 1586 542.1C1589.3 551.1 1587.2 636.4 1586 645C1584.8 653.6 1574 646.9 1571.8 645C1569.6 643.1 1560.9 624.8 1559.2 622C1557.5 619.2 1553.5 613.5 1551.6 611.8C1549.7 610.1 1538.6 602.9 1536.3 601.7C1534 600.5 1529 597.8 1523.7 597.9C1518.4 598 1477.2 603.3 1473 602.5C1468.8 601.7 1470.9 589.9 1473 588C1475.1 586.1 1495.2 581.4 1498.3 580.2C1501.4 579 1508.3 575.8 1509.7 573.8C1511.1 571.8 1514.5 558.8 1514.8 556.1C1515.1 553.4 1512.8 543 1513.5 540.9Z"/>
</g>
<circle cx="1552.500" cy="163.500" r="6" fill="none" stroke="#f2ca8c" stroke-width="2.600"/>
<path d="M856 468.7C860 469.4 872.4 471.5 880 472.8C887.6 474.1 895.7 475.6 901.5 476.6C907.3 477.6 912.8 478.6 915 479" fill="none" stroke="#f5dfa0" stroke-width="3.600"/>
<g fill="#f3e6d6" stroke="none"><path d="M879 461l12 1 1 6-12-1z"/><path d="M882 480l8 1-2 7-7-2z"/></g>
<path d="M1177 555C1176.8 556.7 1177 557.6 1175.9 565.1C1174.8 572.6 1172.2 592 1170.6 600.3C1168.9 608.6 1166.8 612.5 1166 615" fill="none" stroke="#f6e8aa" stroke-width="3.600"/>
<path d="M1549 611L1559.2 622L1571.8 645L1560 645L1552 624.5Z" fill="#f3ebe3" stroke="none"/>
<g fill="#f7f2ea" stroke="none"><path d="M1099.400 573.900L1104.700 567.800L1105.900 573.900Z"/><ellipse cx="1115.800" cy="571.700" rx="5" ry="4.400"/><path d="M1093.300 580.800L1111.700 583.500L1111.500 585.500L1093 582.800Z"/><ellipse cx="1115.600" cy="602.400" rx="4.400" ry="4.400"/><path d="M1084.500 598.500L1090.600 597.700L1091.500 602Z"/><path d="M1100.300 609.100L1105.600 603.800L1107.300 610Z"/><path d="M1125 597l4 0-2 5z"/><path d="M1133 598l5-1-3 5z"/><path d="M1519.900 539.600L1526.700 552.300L1520.600 554Z"/><ellipse cx="1527.500" cy="565.400" rx="8" ry="6.500"/><path d="M1512.300 577.600L1518.600 572.500L1520.600 577.600Z"/><path d="M1532.500 537L1565.500 553.500L1561.700 558.600L1536.300 544.700Z"/><path d="M1523.700 594.100L1550.300 588.500L1550.800 601.200L1529.200 598.200Z" fill="#f6edea"/><path d="M1555.400 586.500L1572.400 586.500L1562.200 598.200Z"/><path d="M1566 601.200L1570.600 612.400L1564.200 606.800Z"/><path d="M1570.600 624.500L1576.900 632.100L1569.300 633.900Z"/></g>
<g fill="#c9d8ef" stroke="none"><path d="M1536 540L1562.500 553.500L1560.500 556.500L1538 545Z"/><ellipse cx="1526.500" cy="567" rx="5" ry="3"/><ellipse cx="1559.200" cy="613.100" rx="3.200" ry="3"/><ellipse cx="1069.500" cy="597.700" rx="3" ry="3"/></g>
<path d="M1088.3 610.2C1090.9 608.6 1097.7 605.2 1103.8 600.3C1109.9 595.4 1120.8 586.9 1124.9 581C1129 575.1 1127.1 570.6 1128.4 565.1C1129.8 559.6 1132.2 550.9 1133 548" stroke="#f6e8aa" stroke-width="3.400"/>
<path d="M1297 100C1296.6 103.1 1295.7 111.1 1294.8 118.4C1293.9 125.7 1293.9 138.5 1291.4 143.7C1288.9 148.9 1283.9 146.8 1279.9 149.5C1275.9 152.2 1269.1 156.2 1267.2 159.9C1265.3 163.6 1266.7 167.8 1268.4 171.4C1270.1 175 1275.5 178.2 1277.6 181.7C1279.7 185.1 1280.6 188.4 1281 192.1C1281.4 195.8 1278.9 199.8 1279.9 203.6C1280.9 207.4 1284.9 210.9 1286.8 215.1C1288.7 219.3 1290.5 224.8 1291.4 229C1292.3 233.2 1291.1 234.2 1292.2 240C1293.3 245.8 1295 256.6 1297.8 263.6C1300.6 270.6 1306.8 272.2 1309 282.2C1311.2 292.1 1310.9 310.2 1310.9 323.3C1310.9 336.4 1310.2 348.1 1309 360.5C1307.8 372.9 1305.3 386.6 1303.4 397.8C1301.5 409 1300 415.7 1297.8 427.7C1295.6 439.7 1292 458.8 1290.4 470C1288.8 481.2 1288.2 475.5 1288 495C1287.8 514.5 1289.2 562 1289 587C1288.8 612 1287.2 635.3 1286.8 645" stroke="#7f848f" stroke-width="1.600" stroke-dasharray="7 2.500 1.500 2.500" stroke-linecap="butt"/>
<path d="M1586 322L1561.800 350L1351.200 559.500L1289 621.600" stroke="#7f848f" stroke-width="1.600" stroke-dasharray="7 2.500 1.500 2.500" stroke-linecap="butt" opacity=".85"/>
<path d="M858 486C860.2 486.6 860.1 486.1 871 489.6C881.9 493.1 907.3 500.8 923.3 507C939.3 513.2 951.6 519.3 966.8 526.6C982 533.9 1006.7 546.6 1014.7 550.6L1012.3 568.7C1021.1 572.9 1048.7 585.6 1065.2 594C1081.7 602.4 1097.9 611.2 1111.3 619.3C1124.7 627.4 1137.7 637.3 1145.8 642.4C1153.9 647.5 1157.6 648.7 1160 650" stroke="#8587a8" stroke-width="1.600" stroke-dasharray="7 2.500 1.500 2.500" stroke-linecap="butt" opacity=".8"/>
<path d="M1362.8 100C1361.3 105.8 1356.1 123 1353.6 134.5C1351.1 146 1348.8 157.5 1347.8 169C1346.8 180.5 1347.2 190.4 1347.8 203.6C1348.4 216.8 1349.3 234.3 1351.2 248C1353.1 261.7 1358.7 271.6 1359.4 286C1360.1 300.4 1358.7 320.1 1355.6 334.4C1352.5 348.7 1347.5 359.9 1340.7 371.7C1333.9 383.5 1321.4 396.6 1314.6 405.3C1307.8 414 1302.2 420.9 1299.7 424" stroke="#a9b3c6" stroke-width="1.800" stroke-dasharray="1 1.600" stroke-linecap="butt"/>
<path d="M1299.7 424C1303.4 426.5 1316.4 431.2 1322 438.9C1327.6 446.6 1329.9 458.3 1333.2 470C1336.5 481.7 1338.8 494.1 1341.8 509C1344.8 523.9 1347.7 541.9 1351.2 559.5C1354.7 577.1 1355.5 600.5 1362.8 614.7C1370.1 629 1389.6 640 1395 645" stroke="#a3adc0" stroke-width="1" stroke-dasharray="1.500 2" stroke-linecap="butt"/>
</g>
<g font-family="Liberation Sans, sans-serif">
<rect x="1524.9" y="119.5" width="32.6" height="11.6" rx="2" fill="#fff" stroke="#9b9b9b" stroke-width=".9"/><text x="1541.2" y="128.5" font-size="9" fill="#505050" text-anchor="middle">I 295</text>
<rect x="1501" y="258.9" width="32.6" height="11.6" rx="2" fill="#fff" stroke="#9b9b9b" stroke-width=".9"/><text x="1517.3" y="267.9" font-size="9" fill="#505050" text-anchor="middle">I 295</text>
<rect x="1461.1" y="348" width="32.6" height="11.6" rx="2" fill="#fff" stroke="#9b9b9b" stroke-width=".9"/><text x="1477.4" y="357" font-size="9" fill="#505050" text-anchor="middle">I 295</text>
<rect x="1463.8" y="444.9" width="32.6" height="11.6" rx="2" fill="#fff" stroke="#9b9b9b" stroke-width=".9"/><text x="1480.1" y="453.9" font-size="9" fill="#505050" text-anchor="middle">I 295</text>
<rect x="1143.3" y="93.7" width="28" height="11.6" rx="2" fill="#fff" stroke="#9b9b9b" stroke-width=".9"/><text x="1157.3" y="102.7" font-size="9" fill="#505050" text-anchor="middle">US 1</text>
<rect x="1160.4" y="261.7" width="28" height="11.6" rx="2" fill="#fff" stroke="#9b9b9b" stroke-width=".9"/><text x="1174.4" y="270.7" font-size="9" fill="#505050" text-anchor="middle">US 1</text>
<rect x="1144.2" y="357.6" width="28" height="11.6" rx="2" fill="#fff" stroke="#9b9b9b" stroke-width=".9"/><text x="1158.2" y="366.6" font-size="9" fill="#505050" text-anchor="middle">US 1</text>
<rect x="1124.3" y="546" width="28" height="11.6" rx="2" fill="#fff" stroke="#9b9b9b" stroke-width=".9"/><text x="1138.3" y="555" font-size="9" fill="#505050" text-anchor="middle">US 1</text>
<rect x="1189.6" y="369.8" width="36" height="11.6" rx="2" fill="#fff" stroke="#9b9b9b" stroke-width=".9"/><text x="1207.6" y="378.8" font-size="9" fill="#505050" text-anchor="middle">VA 400</text>
<rect x="868.4" y="293.2" width="35.6" height="11.6" rx="2" fill="#fff" stroke="#9b9b9b" stroke-width=".9"/><text x="886.2" y="302.2" font-size="9" fill="#505050" text-anchor="middle">VA 420</text>
<rect x="986.9" y="368.2" width="27.7" height="11.6" rx="2" fill="#fff" stroke="#9b9b9b" stroke-width=".9"/><text x="1000.7" y="377.2" font-size="9" fill="#505050" text-anchor="middle">VA 7</text>
<rect x="900.4" y="407.5" width="36" height="11.6" rx="2" fill="#fff" stroke="#9b9b9b" stroke-width=".9"/><text x="918.4" y="416.5" font-size="9" fill="#505050" text-anchor="middle">VA 236</text>
<rect x="996.4" y="424.2" width="36" height="11.6" rx="2" fill="#fff" stroke="#9b9b9b" stroke-width=".9"/><text x="1014.4" y="433.2" font-size="9" fill="#505050" text-anchor="middle">VA 236</text>
<rect x="1092.7" y="440.9" width="36" height="11.6" rx="2" fill="#fff" stroke="#9b9b9b" stroke-width=".9"/><text x="1110.7" y="449.9" font-size="9" fill="#505050" text-anchor="middle">VA 236</text>
<rect x="864.9" y="442.2" width="35.7" height="11.6" rx="2" fill="#fff" stroke="#9b9b9b" stroke-width=".9"/><text x="882.7" y="451.2" font-size="9" fill="#505050" text-anchor="middle">VA 241</text>
<rect x="836.1" y="476.6" width="35.7" height="11.6" rx="2" fill="#fff" stroke="#9b9b9b" stroke-width=".9"/><text x="854" y="485.6" font-size="9" fill="#505050" text-anchor="middle">VA 241</text>
</g>
<g font-family="Liberation Sans, sans-serif" font-weight="bold" font-size="10.200" fill="#7a6f6a" text-anchor="middle" stroke="#f7f5f1" stroke-width="1.600" paint-order="stroke">
<text x="904" y="107" letter-spacing=".9">PARK</text>
<text x="960" y="198.500" letter-spacing=".5">BRADDOCK</text>
<text x="1033" y="316" letter-spacing=".5">ROSEMONT</text>
<text x="1392.500" y="380.600" letter-spacing=".6">GOOSE ISLAND</text>
<text x="1453" y="589" letter-spacing=".6">ROSILIE</text>
<text x="1453" y="601" letter-spacing=".6">ISLAND</text>
<text x="860" y="262" font-size="10">N</text>
</g>
<g font-family="DejaVu Sans, Liberation Sans, sans-serif" fill="#555" stroke="#f7f5f1" stroke-width="2" paint-order="stroke" stroke-opacity=".8">
<text x="1146" y="432.500" font-size="19.600">Alexandria</text>
<text x="886.500" y="593.400" font-size="15.800">Huntington</text>
</g>
<g font-family="DejaVu Sans, Liberation Sans, sans-serif" font-size="10" fill="#a09a7d" text-anchor="middle" stroke="#f7f4e6" stroke-width="1.500" paint-order="stroke" stroke-opacity=".7">
<text transform="translate(1101 201) rotate(-6.4)" y="3.500">East Monroe Avenue</text>
<text transform="translate(1199 306.5) rotate(10)" y="3.500">Madison Street</text>
<text transform="translate(1124 348) rotate(-78.5)" y="3.500">North West Street</text>
<text transform="translate(1252 355) rotate(-78.5)" y="3.500">North Royal Street</text>
<text transform="translate(1231.5 466.5) rotate(10)" y="3.500">Duke Street</text>
<text transform="translate(1198 512) rotate(10)" y="3.500">Gibbon Street</text>
<text transform="translate(943.5 484.5) rotate(7)" y="3.500">Eisenhower Avenue</text>
<text transform="translate(1058.5 621.5) rotate(-27)" y="3.500">Richmond Highway</text>
<text transform="translate(1192.5 122) rotate(84)" y="3.500">Avenue</text>
</g>
<g fill="#b9434d"><circle cx="1239.8" cy="277.5" r="2.800"/><circle cx="1238.4" cy="305.1" r="2.800"/><circle cx="1268.1" cy="311.8" r="2.800"/><circle cx="1225" cy="312.5" r="2.800"/><circle cx="1232.9" cy="314.1" r="2.800"/><circle cx="1186.8" cy="323.3" r="2.800"/><circle cx="1217.7" cy="329.5" r="2.800"/><circle cx="1221.8" cy="337.3" r="2.800"/><circle cx="1134.5" cy="338.3" r="2.800"/><circle cx="1160.3" cy="336" r="2.800"/><circle cx="1212.6" cy="361.5" r="2.800"/><circle cx="1109" cy="412.1" r="2.800"/><circle cx="1035.8" cy="419.5" r="2.800"/><circle cx="1062.2" cy="423.7" r="2.800"/><circle cx="1235.5" cy="418.6" r="2.800"/><circle cx="1188.3" cy="421.8" r="2.800"/><circle cx="1113.2" cy="444.1" r="2.800"/><circle cx="990.4" cy="455.7" r="2.800"/><circle cx="1032.1" cy="474.2" r="2.800"/><circle cx="1164.2" cy="490" r="2.800"/><circle cx="1226.3" cy="506.8" r="2.800"/><circle cx="1245.8" cy="520.9" r="2.800"/><circle cx="1179" cy="528.4" r="2.800"/><circle cx="1248.4" cy="544.6" r="2.800"/><circle cx="1277" cy="556.7" r="2.800"/></g>
<rect x="858" y="102" width="5" height="541" fill="#f1f3f4" opacity=".55"/>
</svg></div>
<!-- dropdown menu -->
<div id="menu" class="abs">
<div class="abs" style="left:0;top:0;width:175px;height:30px;background:linear-gradient(#1b2133,#232a3c);border-radius:3px 3px 0 0"></div>
<div class="it" style="top:0">Rename</div>
<div class="it" style="top:29px">Remove</div>
<div class="it" style="top:58.500px">Export</div>
<div class="it" style="top:87.500px">Hide</div>
<!-- rename icon -->
<svg style="left:7px;top:8px" width="15" height="14" viewBox="0 0 15 14"><g transform="rotate(-38 7.500 7)"><rect x=".6" y="3.500" width="13.800" height="7" rx="3.500" fill="#e6e7ec"/><rect x="8.300" y="5.200" width="3.600" height="3.600" rx="1.200" fill="#1a2033"/><path d="M6.600 3.500 V10.500" stroke="#1a2033" stroke-width="1"/></g></svg>
<!-- remove icon -->
<svg style="left:7px;top:37px" width="14" height="15" viewBox="0 0 14 15"><rect x="1" y="2.400" width="12" height="11.800" rx="1.400" fill="none" stroke="#e4e5ea" stroke-width="1.800"/><path d="M1 5.200 H13" stroke="#e4e5ea" stroke-width="2"/><rect x="5.200" y=".3" width="3.600" height="2.400" rx=".8" fill="#e4e5ea"/><path d="M4 7.600 V11.600 M6 7.600 V11.600 M8 7.600 V11.600 M10 7.600 V11.600" stroke="#e4e5ea" stroke-width="1.200"/></svg>
<!-- export icon -->
<svg style="left:3.500px;top:63px" width="21" height="21" viewBox="0 0 22 22"><path d="M4.400 5.600 V2 a1 1 0 0 1 1 -1 H12 L15.600 4.600 V10" fill="none" stroke="#e4e5ea" stroke-width="1.300"/><path d="M4.400 12.400 V19.400 a1 1 0 0 0 1 1 H12.500" fill="none" stroke="#e4e5ea" stroke-width="1.300"/><rect x=".6" y="6" width="12.600" height="6" rx="1.200" fill="#e4e5ea"/><text x="6.900" y="10.600" font-family="Liberation Sans, sans-serif" font-size="4.600" font-weight="bold" fill="#151a2d" text-anchor="middle">CSV</text><path d="M17.400 11.500 V19.500 M14.600 17 L17.400 20.200 L20.200 17 Z" fill="#e4e5ea" stroke="#e4e5ea" stroke-width="1.500" stroke-linejoin="round"/></svg>
<!-- hide icon -->
<svg style="left:3px;top:95px" width="23" height="15" viewBox="0 0 23 15"><path d="M.6 7.500 C4 2 8 .6 11.500 .6 S19 2 22.400 7.500 C19 13 15 14.400 11.500 14.400 S4 13 .6 7.500 z" fill="#fff"/><circle cx="11.500" cy="7.500" r="4.600" fill="#151a2d"/><circle cx="11.500" cy="7.500" r="2.300" fill="#fff"/></svg>
</div>
<!-- cursor -->
<svg class="abs" style="left:324px;top:57px" width="16" height="17" viewBox="0 0 16 17"><path d="M3.600 1.200 c.9 -.5 1.700 0 2 .8 L7.400 6 c.4 -.5 1.300 -.5 1.700 .1 c.5 -.5 1.500 -.4 1.800 .3 c.6 -.4 1.500 -.1 1.700 .7 c.5 1.800 .9 3.600 .5 5.400 c-.3 1.400 -1.500 2.600 -3.200 2.900 c-1.800 .3 -3.600 -.2 -4.500 -1.500 L2.200 10 c-.5 -.800 .5 -1.800 1.400 -1.200 l1.100 1 L2.800 3 c-.2 -.7 .1 -1.500 .8 -1.800z" fill="#fff" stroke="#1a1a1a" stroke-width="1.100" stroke-linejoin="round"/><path d="M8.200 10.200 V13 M9.900 10.200 V13 M11.500 10.200 V13" stroke="#1a1a1a" stroke-width=".8"/></svg>
<!-- legend -->
<div id="legend" class="abs"><i></i><span>SampleType.csv</span></div>
<!-- resize handle -->
<div class="abs" style="left:847px;top:430px;width:7px;height:7px;border-radius:50%;background:#77787b"></div>
</body>
</html>
